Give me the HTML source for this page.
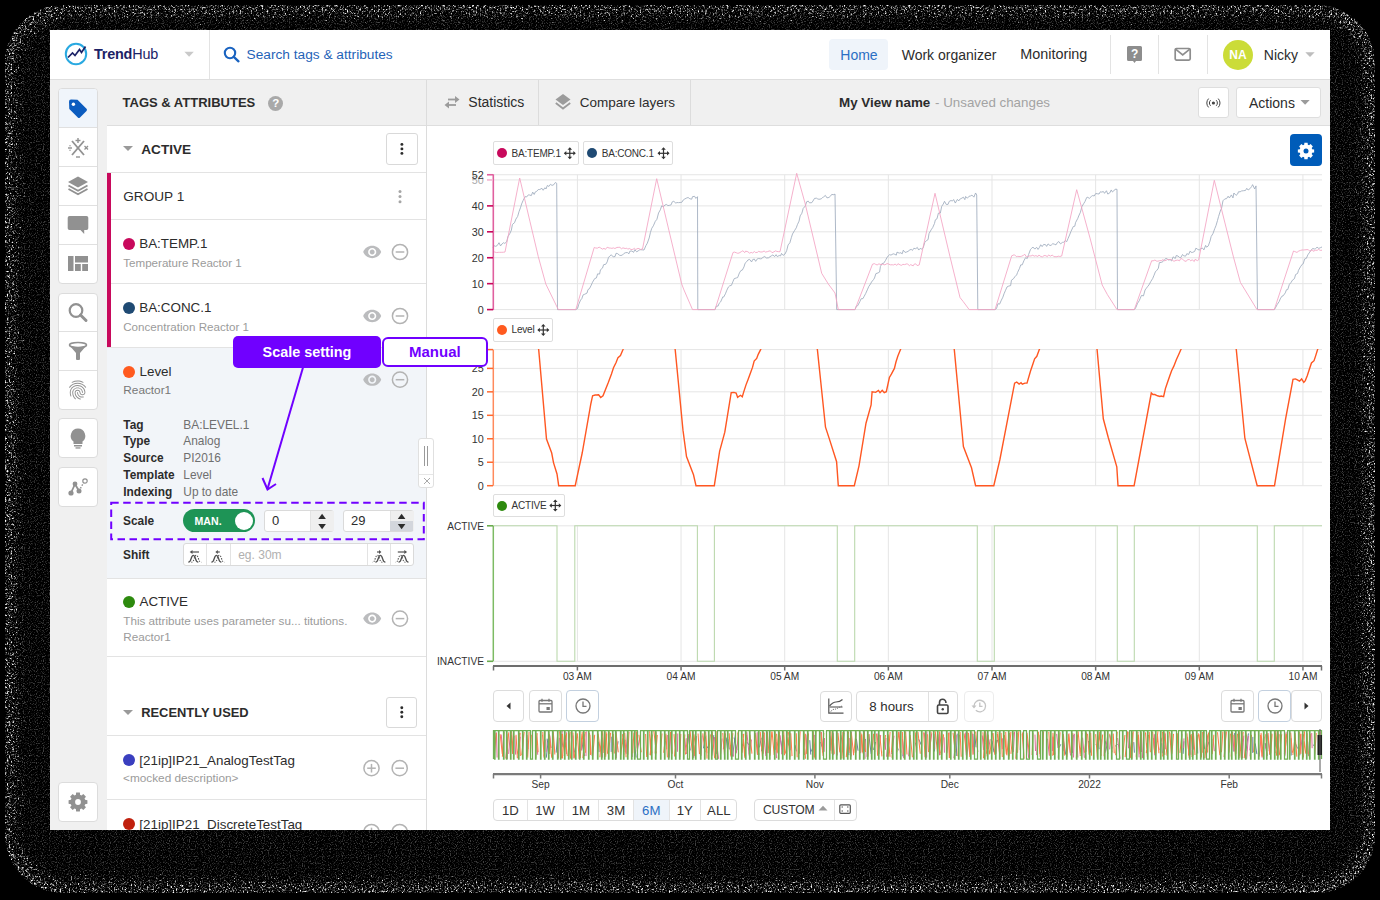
<!DOCTYPE html><html><head><meta charset="utf-8"><style>
html,body{margin:0;padding:0;width:1380px;height:900px;overflow:hidden;background:#000;}
body{position:relative;font-family:"Liberation Sans", sans-serif;}
.t{position:absolute;white-space:nowrap;font-family:"Liberation Sans", sans-serif;}
svg{overflow:visible}
</style></head><body><svg style="position:absolute;left:0;top:0" width="1380" height="900" viewBox="0 0 1380 900"><defs><clipPath id="oc"><rect x="5" y="5" width="1370" height="888" rx="58"/></clipPath><filter id="nz" filterUnits="userSpaceOnUse" x="0" y="0" width="1380" height="900" color-interpolation-filters="sRGB"><feTurbulence type="fractalNoise" baseFrequency="0.55" numOctaves="2" seed="4" result="n"/><feColorMatrix in="n" type="matrix" values="0 0 0 0 0  0 0 0 0 0  0 0 0 0 0  1 0 0 0 0" result="na"/><feGaussianBlur in="SourceAlpha" stdDeviation="16" result="b"/><feComposite in="na" in2="b" operator="arithmetic" k1="0" k2="4" k3="4" k4="-3.65" result="c"/><feColorMatrix in="c" type="matrix" values="0 0 0 0 1  0 0 0 0 1  0 0 0 0 1  0 0 0 1 0"/></filter><filter id="nz2" filterUnits="userSpaceOnUse" x="0" y="0" width="1380" height="900" color-interpolation-filters="sRGB"><feTurbulence type="fractalNoise" baseFrequency="0.85" numOctaves="1" seed="9" result="n"/><feColorMatrix in="n" type="matrix" values="0 0 0 0 0.25  0 0 0 0 0.25  0 0 0 0 0.25  5 0 0 0 -2.6"/><feComposite in2="SourceAlpha" operator="in"/></filter></defs><g clip-path="url(#oc)"><rect x="5" y="5" width="1370" height="888" rx="58" fill="#fff" filter="url(#nz2)"/></g><g clip-path="url(#oc)"><rect x="5" y="5" width="1370" height="888" rx="58" fill="none" stroke="#fff" stroke-width="16" filter="url(#nz)"/></g></svg><div style="position:absolute;left:50.00px;top:30.00px;width:1280.00px;height:800.00px;background:#fff;"></div><div style="position:absolute;left:0;top:0;width:1380px;height:900px;clip-path:inset(30px 50px 70px 50px);"><div style="position:absolute;left:50.00px;top:79.00px;width:1280.00px;height:1.00px;background:#dedede;"></div><svg style="position:absolute;left:60px;top:40px;" width="32" height="30" viewBox="0 0 32 30"><circle cx="16" cy="14" r="10.2" fill="none" stroke="#29a9e1" stroke-width="2"/><polyline points="8,17.5 12.5,13 15,15.5 19.5,9.5 21.5,12.5 25.5,6.5" fill="none" stroke="#1c2266" stroke-width="1.7" stroke-linejoin="miter"/></svg><div class="t" style="left:94.00px;top:46.37px;font-size:14.4px;line-height:17.28px;color:#1c2266;font-weight:400;letter-spacing:-0.2px;"><b>Trend</b>Hub</div><svg style="position:absolute;left:184px;top:51px;" width="11" height="6" viewBox="0 0 11 6"><polygon points="0.4,0.7 9.8,0.7 5.1,5.8" fill="#c9c9c9"/></svg><div style="position:absolute;left:209.00px;top:30.00px;width:1.00px;height:49.00px;background:#e3e3e3;"></div><svg style="position:absolute;left:222px;top:46px;" width="20" height="18" viewBox="0 0 20 18"><circle cx="8" cy="7" r="5.2" fill="none" stroke="#1a63c0" stroke-width="2.1"/><line x1="11.8" y1="10.8" x2="16.5" y2="15.3" stroke="#1a63c0" stroke-width="2.3" stroke-linecap="round"/></svg><div class="t" style="left:246.60px;top:47.43px;font-size:13.7px;line-height:16.44px;color:#1f63b8;font-weight:400;">Search tags &amp; attributes</div><div style="position:absolute;left:829.00px;top:38.50px;width:59.00px;height:31.50px;background:#eff4fa;border-radius:4px;"></div><div class="t" style="left:840.30px;top:46.75px;font-size:14px;line-height:16.8px;color:#2a6fc4;font-weight:400;">Home</div><div class="t" style="left:901.70px;top:46.75px;font-size:14px;line-height:16.8px;color:#2c2c2c;font-weight:400;">Work organizer</div><div class="t" style="left:1020.20px;top:46.37px;font-size:14.4px;line-height:17.28px;color:#2c2c2c;font-weight:400;">Monitoring</div><div style="position:absolute;left:1110.00px;top:35.00px;width:1.00px;height:39.00px;background:#e3e3e3;"></div><div style="position:absolute;left:1158.00px;top:35.00px;width:1.00px;height:39.00px;background:#e3e3e3;"></div><div style="position:absolute;left:1207.00px;top:35.00px;width:1.00px;height:39.00px;background:#e3e3e3;"></div><svg style="position:absolute;left:1126px;top:45px;" width="18" height="20" viewBox="0 0 18 20"><path d="M2.5,1 h12 a1.5,1.5 0 0 1 1.5,1.5 v12 a1.5,1.5 0 0 1 -1.5,1.5 h-4.5 l-1.5,2 l-1.5,-2 h-4.5 a1.5,1.5 0 0 1 -1.5,-1.5 v-12 a1.5,1.5 0 0 1 1.5,-1.5z" fill="#8d8d8d"/><text x="8.6" y="13" font-size="12" font-weight="700" fill="#fff" text-anchor="middle" font-family="Liberation Sans">?</text></svg><svg style="position:absolute;left:1173px;top:46px;" width="20" height="17" viewBox="0 0 20 17"><rect x="2.2" y="2.5" width="15" height="11.6" rx="1.3" fill="none" stroke="#8d8d8d" stroke-width="1.7"/><polyline points="2.6,3.2 9.7,9 16.8,3.2" fill="none" stroke="#8d8d8d" stroke-width="1.7"/></svg><div style="position:absolute;left:1223px;top:39.5px;width:30px;height:30px;border-radius:50%;background:#cbdc38;"></div><div class="t" style="left:1038.00px;width:400px;text-align:center;top:47.64px;font-size:12px;line-height:14.4px;color:#fff;font-weight:700;">NA</div><div class="t" style="left:1263.80px;top:46.85px;font-size:14px;line-height:16.8px;color:#2c2c2c;font-weight:400;">Nicky</div><svg style="position:absolute;left:1305px;top:52px;" width="11" height="6" viewBox="0 0 11 6"><polygon points="0.3,0.2 9.7,0.2 5,4.9" fill="#bdbdbd"/></svg><div style="position:absolute;left:50.00px;top:80.00px;width:57.00px;height:750.00px;background:#f0f0f0;"></div><div style="position:absolute;left:58.00px;top:88.00px;width:40.00px;height:196.00px;background:#fff;border:1px solid #dcdcdc;border-radius:4px;box-sizing:border-box;"></div><div style="position:absolute;left:59.00px;top:89.00px;width:38.00px;height:38.00px;background:#f0f5fb;border-radius:3px 3px 0 0;"></div><div style="position:absolute;left:59.00px;top:127.00px;width:38.00px;height:1.00px;background:#e0e0e0;"></div><div style="position:absolute;left:59.00px;top:166.00px;width:38.00px;height:1.00px;background:#e0e0e0;"></div><div style="position:absolute;left:59.00px;top:205.00px;width:38.00px;height:1.00px;background:#e0e0e0;"></div><div style="position:absolute;left:59.00px;top:244.00px;width:38.00px;height:1.00px;background:#e0e0e0;"></div><div style="position:absolute;left:58.00px;top:292.50px;width:40.00px;height:117.50px;background:#fff;border:1px solid #dcdcdc;border-radius:4px;box-sizing:border-box;"></div><div style="position:absolute;left:59.00px;top:331.00px;width:38.00px;height:1.00px;background:#e0e0e0;"></div><div style="position:absolute;left:59.00px;top:370.00px;width:38.00px;height:1.00px;background:#e0e0e0;"></div><div style="position:absolute;left:58.00px;top:418.00px;width:40.00px;height:40.00px;background:#fff;border:1px solid #dcdcdc;border-radius:4px;box-sizing:border-box;"></div><div style="position:absolute;left:58.00px;top:467.00px;width:40.00px;height:40.00px;background:#fff;border:1px solid #dcdcdc;border-radius:4px;box-sizing:border-box;"></div><div style="position:absolute;left:58.00px;top:782.00px;width:40.00px;height:40.00px;background:#fff;border:1px solid #dcdcdc;border-radius:4px;box-sizing:border-box;"></div><svg style="position:absolute;left:66px;top:97px;" width="24" height="24" viewBox="0 0 24 24"><path d="M3,4.5 a2,2 0 0 1 2,-2 l6.5,0.3 l9,9 a1.6,1.6 0 0 1 0,2.2 l-6.5,6.5 a1.6,1.6 0 0 1 -2.2,0 l-8.5,-8.5z" fill="#0b5cbf"/><circle cx="7.4" cy="7.2" r="1.7" fill="#fff"/></svg><svg style="position:absolute;left:66px;top:137px;" width="24" height="22" viewBox="0 0 24 22"><line x1="6" y1="4" x2="18" y2="18" stroke="#919191" stroke-width="1.8"/><line x1="18" y1="4" x2="6" y2="18" stroke="#919191" stroke-width="1.8"/><line x1="12" y1="1" x2="12" y2="6" stroke="#919191" stroke-width="1.4"/><line x1="9.5" y1="3.5" x2="14.5" y2="3.5" stroke="#919191" stroke-width="1.4"/><line x1="2" y1="11" x2="6" y2="11" stroke="#919191" stroke-width="1.4"/><circle cx="4" cy="8.8" r="0.7" fill="#919191"/><circle cx="4" cy="13.2" r="0.7" fill="#919191"/><line x1="18.5" y1="9" x2="22" y2="12.5" stroke="#919191" stroke-width="1.3"/><line x1="22" y1="9" x2="18.5" y2="12.5" stroke="#919191" stroke-width="1.3"/><line x1="10" y1="20" x2="14" y2="20" stroke="#919191" stroke-width="1.4"/></svg><svg style="position:absolute;left:66px;top:175px;" width="24" height="22" viewBox="0 0 24 22"><polygon points="12,1.5 22,7 12,12.5 2,7" fill="#919191"/><polyline points="2.5,10.5 12,15.8 21.5,10.5" fill="none" stroke="#919191" stroke-width="1.8"/><polyline points="2.5,14 12,19.3 21.5,14" fill="none" stroke="#919191" stroke-width="1.8"/></svg><svg style="position:absolute;left:66px;top:214px;" width="24" height="22" viewBox="0 0 24 22"><path d="M3.5,2 h17 a1.8,1.8 0 0 1 1.8,1.8 v10.5 a1.8,1.8 0 0 1 -1.8,1.8 h-2.3 v3.8 l-3.8,-3.8 h-10.9 a1.8,1.8 0 0 1 -1.8,-1.8 v-10.5 a1.8,1.8 0 0 1 1.8,-1.8z" fill="#919191"/></svg><svg style="position:absolute;left:66px;top:253px;" width="24" height="22" viewBox="0 0 24 22"><rect x="2" y="3" width="5.5" height="15" fill="#919191"/><rect x="9" y="3" width="13" height="6.5" fill="#919191"/><rect x="9" y="11" width="5.8" height="7" fill="#919191"/><rect x="16.2" y="11" width="5.8" height="7" fill="#919191"/></svg><svg style="position:absolute;left:66px;top:301px;" width="24" height="22" viewBox="0 0 24 22"><circle cx="10" cy="9.5" r="6.3" fill="none" stroke="#919191" stroke-width="2.2"/><line x1="14.5" y1="14" x2="20" y2="19.5" stroke="#919191" stroke-width="3" stroke-linecap="round"/></svg><svg style="position:absolute;left:66px;top:340px;" width="24" height="22" viewBox="0 0 24 22"><ellipse cx="12" cy="5" rx="8.5" ry="2.5" fill="none" stroke="#919191" stroke-width="1.6"/><path d="M3.5,5.5 Q12,9 20.5,5.5 L14,13 V19 a1,1 0 0 1 -1,1 h-2 a1,1 0 0 1 -1,-1 V13z" fill="#919191"/></svg><svg style="position:absolute;left:66px;top:378px;" width="24" height="24" viewBox="0 0 24 24"><g transform="translate(0.2,0.6) scale(0.95)"><path d="M17.81 4.47c-.08 0-.16-.02-.23-.06C15.66 3.42 14 3 12.01 3c-1.98 0-3.86.47-5.57 1.41-.24.13-.54.04-.68-.2-.13-.24-.04-.55.2-.68C7.82 2.52 9.86 2 12.01 2c2.13 0 3.98.47 6.01 1.52.25.13.34.43.21.67-.09.18-.26.28-.42.28zM3.5 9.72c-.1 0-.2-.03-.29-.09-.23-.16-.28-.47-.12-.7.99-1.4 2.250-2.5 3.75-3.27C9.98 4.04 14 4.03 17.15 5.65c1.5.77 2.76 1.86 3.75 3.25.16.22.11.54-.12.7-.23.16-.54.11-.7-.12-.9-1.26-2.04-2.25-3.39-2.94-2.87-1.47-6.54-1.47-9.4.01-1.36.7-2.5 1.7-3.4 2.96-.08.14-.23.21-.39.21zm6.25 12.07c-.13 0-.26-.05-.35-.15-.87-.87-1.340-1.43-2.01-2.64-.69-1.23-1.05-2.73-1.05-4.34 0-2.97 2.54-5.39 5.66-5.39s5.66 2.42 5.66 5.39c0 .28-.22.5-.5.5s-.5-.22-.5-.5c0-2.42-2.09-4.39-4.66-4.39-2.57 0-4.66 1.97-4.66 4.39 0 1.44.32 2.77.93 3.85.64 1.15 1.08 1.64 1.85 2.42.19.2.19.51 0 .71-.11.1-.24.15-.37.15zm7.17-1.85c-1.19 0-2.24-.3-3.1-.89-1.49-1.01-2.38-2.65-2.38-4.39 0-.28.22-.5.5-.5s.5.22.5.5c0 1.410.72 2.74 1.94 3.56.71.48 1.54.71 2.54.71.24 0 .64-.03 1.04-.1.27-.05.53.13.58.41.05.27-.13.53-.41.58-.57.11-1.07.12-1.21.12zM14.91 22c-.04 0-.09-.01-.13-.02-1.59-.44-2.63-1.03-3.72-2.1-1.4-1.39-2.17-3.24-2.17-5.22 0-1.62 1.38-2.94 3.08-2.94 1.7 0 3.08 1.32 3.08 2.94 0 1.07.93 1.94 2.08 1.94s2.08-.87 2.08-1.94c0-3.77-3.25-6.830-7.25-6.83-2.84 0-5.44 1.58-6.61 4.03-.39.81-.59 1.76-.59 2.8 0 .78.07 2.01.67 3.61.1.26-.03.55-.29.64-.26.1-.55-.04-.64-.29-.49-1.31-.73-2.61-.73-3.96 0-1.2.23-2.29.68-3.24 1.33-2.79 4.28-4.6 7.51-4.6 4.55 0 8.25 3.51 8.25 7.83 0 1.62-1.38 2.94-3.08 2.94s-3.08-1.32-3.08-2.94c0-1.07-.93-1.94-2.08-1.94s-2.08.87-2.08 1.94c0 1.71.66 3.31 1.87 4.51.95.94 1.86 1.46 3.27 1.85.27.07.42.350.35.61-.05.23-.26.38-.47.38z" fill="#919191"/></g></svg><svg style="position:absolute;left:66px;top:427px;" width="24" height="22" viewBox="0 0 24 22"><path d="M12,1.5 a7.3,7.3 0 0 1 4.5,13 v2.5 h-9 v-2.5 a7.3,7.3 0 0 1 4.5,-13z" fill="#919191"/><rect x="8" y="18" width="8" height="1.5" fill="#919191"/><rect x="9.5" y="20.3" width="5" height="1.3" fill="#919191"/></svg><svg style="position:absolute;left:66px;top:476px;" width="24" height="22" viewBox="0 0 24 22"><line x1="5" y1="17" x2="9" y2="8" stroke="#919191" stroke-width="1.8"/><line x1="9" y1="8" x2="13" y2="15" stroke="#919191" stroke-width="1.8"/><line x1="13" y1="15" x2="18" y2="6" stroke="#919191" stroke-width="1.4" stroke-dasharray="1.5,1.5"/><circle cx="5" cy="17" r="2.6" fill="#919191"/><circle cx="9" cy="8" r="2.4" fill="#919191"/><circle cx="13" cy="15" r="2.5" fill="#919191"/><circle cx="19" cy="5" r="2.2" fill="#fff" stroke="#919191" stroke-width="1.2"/></svg><svg style="position:absolute;left:66px;top:790px;" width="24" height="24" viewBox="0 0 24 24"><polygon points="19.09,9.87 21.42,10.14 21.42,13.86 19.09,14.13 18.52,15.50 19.97,17.35 17.35,19.97 15.50,18.52 14.13,19.09 13.86,21.42 10.14,21.42 9.87,19.09 8.50,18.52 6.65,19.97 4.03,17.35 5.48,15.50 4.91,14.13 2.58,13.86 2.58,10.14 4.91,9.87 5.48,8.50 4.03,6.65 6.65,4.03 8.50,5.48 9.87,4.91 10.14,2.58 13.86,2.58 14.13,4.91 15.50,5.48 17.35,4.03 19.97,6.65 18.52,8.50" fill="#919191"/><circle cx="12" cy="12" r="6.88" fill="#919191"/><circle cx="12" cy="12" r="2.9" fill="#fff"/></svg><div style="position:absolute;left:107.00px;top:80.00px;width:320.00px;height:45.00px;background:#f0f0f0;"></div><div style="position:absolute;left:107.00px;top:125.00px;width:319.00px;height:705.00px;background:#fff;"></div><div style="position:absolute;left:426.00px;top:80.00px;width:1.00px;height:750.00px;background:#dcdcdc;"></div><div style="position:absolute;left:107.00px;top:125.00px;width:319.00px;height:1.00px;background:#dedede;"></div><div class="t" style="left:122.60px;top:95.10px;font-size:13px;line-height:15.6px;color:#2c2c2c;font-weight:700;">TAGS &amp; ATTRIBUTES</div><div style="position:absolute;left:268.3px;top:95.7px;width:15px;height:15px;border-radius:50%;background:#a9a9a9;"></div><div class="t" style="left:75.80px;width:400px;text-align:center;top:96.62px;font-size:11.5px;line-height:13.8px;color:#fff;font-weight:700;">?</div><svg style="position:absolute;left:122px;top:145px;" width="12" height="7" viewBox="0 0 12 7"><polygon points="1,1 11,1 6,6" fill="#9a9a9a"/></svg><div class="t" style="left:141.30px;top:141.63px;font-size:13.6px;line-height:16.32px;color:#2c2c2c;font-weight:700;">ACTIVE</div><div style="position:absolute;left:386.20px;top:133.20px;width:31.40px;height:31.40px;background:#fff;border:1px solid #d9d9d9;border-radius:3px;box-sizing:border-box;"></div><svg style="position:absolute;left:396px;top:140px;" width="10" height="16" viewBox="0 0 10 16"><circle cx="5.90" cy="4.40" r="1.45" fill="#2c2c2c"/><circle cx="5.90" cy="8.90" r="1.45" fill="#2c2c2c"/><circle cx="5.90" cy="13.40" r="1.45" fill="#2c2c2c"/></svg><div style="position:absolute;left:107.00px;top:172.00px;width:319.00px;height:1.00px;background:#e3e3e3;"></div><div style="position:absolute;left:107.00px;top:172.50px;width:4.00px;height:175.00px;background:#c8095c;"></div><div class="t" style="left:123.25px;top:188.88px;font-size:13.6px;line-height:16.32px;color:#2c2c2c;font-weight:400;">GROUP 1</div><svg style="position:absolute;left:395px;top:189px;" width="10" height="16" viewBox="0 0 10 16"><circle cx="5" cy="2.3999999999999995" r="1.5" fill="#a6a6a6"/><circle cx="5" cy="7.6" r="1.5" fill="#a6a6a6"/><circle cx="5" cy="12.8" r="1.5" fill="#a6a6a6"/></svg><div style="position:absolute;left:111.00px;top:219.00px;width:315.00px;height:1.00px;background:#e3e3e3;"></div><div style="position:absolute;left:123.10px;top:237.80px;width:12px;height:12px;border-radius:50%;background:#c8095c;"></div><div class="t" style="left:139.25px;top:236.07px;font-size:13.4px;line-height:16.08px;color:#2c2c2c;font-weight:400;">BA:TEMP.1</div><div class="t" style="left:123.25px;top:255.77px;font-size:11.6px;line-height:13.92px;color:#9b9b9b;font-weight:400;">Temperature Reactor 1</div><svg style="position:absolute;left:362px;top:242px;" width="20" height="20" viewBox="0 0 20 20"><g transform="translate(0.38,0.18) scale(0.818)"><path d="M12 4.5C7 4.5 2.73 7.61 1 12c1.73 4.39 6 7.5 11 7.5s9.27-3.11 11-7.5c-1.73-4.39-6-7.5-11-7.5zM12 17c-2.76 0-5-2.24-5-5s2.24-5 5-5 5 2.24 5 5-2.24 5-5 5zm0-8c-1.66 0-3 1.34-3 3s1.34 3 3 3 3-1.34 3-3-1.34-3-3-3z" fill="#bbbcbe"/></g></svg><svg style="position:absolute;left:390px;top:242px;" width="20" height="20" viewBox="0 0 20 20"><circle cx="10.00" cy="10.00" r="7.6" fill="none" stroke="#b3b3b3" stroke-width="1.5"/><line x1="5.70" y1="10.00" x2="14.30" y2="10.00" stroke="#b3b3b3" stroke-width="1.5"/></svg><div style="position:absolute;left:111.00px;top:283.00px;width:315.00px;height:1.00px;background:#e3e3e3;"></div><div style="position:absolute;left:123.10px;top:301.60px;width:12px;height:12px;border-radius:50%;background:#1f4a73;"></div><div class="t" style="left:139.25px;top:299.82px;font-size:13.4px;line-height:16.08px;color:#2c2c2c;font-weight:400;">BA:CONC.1</div><div class="t" style="left:123.25px;top:319.52px;font-size:11.6px;line-height:13.92px;color:#9b9b9b;font-weight:400;">Concentration Reactor 1</div><svg style="position:absolute;left:362px;top:306px;" width="20" height="20" viewBox="0 0 20 20"><g transform="translate(0.38,0.18) scale(0.818)"><path d="M12 4.5C7 4.5 2.73 7.61 1 12c1.73 4.39 6 7.5 11 7.5s9.27-3.11 11-7.5c-1.73-4.39-6-7.5-11-7.5zM12 17c-2.76 0-5-2.24-5-5s2.24-5 5-5 5 2.24 5 5-2.24 5-5 5zm0-8c-1.66 0-3 1.34-3 3s1.34 3 3 3 3-1.34 3-3-1.34-3-3-3z" fill="#bbbcbe"/></g></svg><svg style="position:absolute;left:390px;top:306px;" width="20" height="20" viewBox="0 0 20 20"><circle cx="10.00" cy="10.00" r="7.6" fill="none" stroke="#b3b3b3" stroke-width="1.5"/><line x1="5.70" y1="10.00" x2="14.30" y2="10.00" stroke="#b3b3b3" stroke-width="1.5"/></svg><div style="position:absolute;left:107.00px;top:347.00px;width:319.00px;height:1.00px;background:#e3e3e3;"></div><div style="position:absolute;left:107.00px;top:348.00px;width:319.00px;height:230.50px;background:#f2f5f9;"></div><div style="position:absolute;left:123.10px;top:365.60px;width:12px;height:12px;border-radius:50%;background:#ff5a1f;"></div><div class="t" style="left:139.50px;top:363.62px;font-size:13.4px;line-height:16.08px;color:#2c2c2c;font-weight:400;">Level</div><div class="t" style="left:123.30px;top:383.43px;font-size:11.8px;line-height:14.16px;color:#777;font-weight:400;">Reactor1</div><svg style="position:absolute;left:362px;top:369px;" width="20" height="20" viewBox="0 0 20 20"><g transform="translate(0.38,0.88) scale(0.818)"><path d="M12 4.5C7 4.5 2.73 7.61 1 12c1.73 4.39 6 7.5 11 7.5s9.27-3.11 11-7.5c-1.73-4.39-6-7.5-11-7.5zM12 17c-2.76 0-5-2.24-5-5s2.24-5 5-5 5 2.24 5 5-2.24 5-5 5zm0-8c-1.66 0-3 1.34-3 3s1.34 3 3 3 3-1.34 3-3-1.34-3-3-3z" fill="#bbbcbe"/></g></svg><svg style="position:absolute;left:390px;top:369px;" width="20" height="20" viewBox="0 0 20 20"><circle cx="10.00" cy="10.70" r="7.6" fill="none" stroke="#b3b3b3" stroke-width="1.5"/><line x1="5.70" y1="10.70" x2="14.30" y2="10.70" stroke="#b3b3b3" stroke-width="1.5"/></svg><div class="t" style="left:123.30px;top:417.74px;font-size:11.9px;line-height:14.28px;color:#2c2c2c;font-weight:700;">Tag</div><div class="t" style="left:183.30px;top:417.74px;font-size:11.9px;line-height:14.28px;color:#6f6f6f;font-weight:400;">BA:LEVEL.1</div><div class="t" style="left:123.30px;top:434.24px;font-size:11.9px;line-height:14.28px;color:#2c2c2c;font-weight:700;">Type</div><div class="t" style="left:183.30px;top:434.24px;font-size:11.9px;line-height:14.28px;color:#6f6f6f;font-weight:400;">Analog</div><div class="t" style="left:123.30px;top:451.24px;font-size:11.9px;line-height:14.28px;color:#2c2c2c;font-weight:700;">Source</div><div class="t" style="left:183.30px;top:451.24px;font-size:11.9px;line-height:14.28px;color:#6f6f6f;font-weight:400;">PI2016</div><div class="t" style="left:123.30px;top:468.24px;font-size:11.9px;line-height:14.28px;color:#2c2c2c;font-weight:700;">Template</div><div class="t" style="left:183.30px;top:468.24px;font-size:11.9px;line-height:14.28px;color:#6f6f6f;font-weight:400;">Level</div><div class="t" style="left:123.30px;top:484.74px;font-size:11.9px;line-height:14.28px;color:#2c2c2c;font-weight:700;">Indexing</div><div class="t" style="left:183.30px;top:484.74px;font-size:11.9px;line-height:14.28px;color:#6f6f6f;font-weight:400;">Up to date</div><svg style="position:absolute;left:0px;top:0px;" width="1380" height="900" viewBox="0 0 1380 900"><rect x="111.2" y="502.7" width="312.6" height="36.6" fill="none" stroke="#7000ff" stroke-width="2" stroke-dasharray="7.5,4.5"/></svg><div class="t" style="left:123.00px;top:513.74px;font-size:11.9px;line-height:14.28px;color:#2c2c2c;font-weight:700;">Scale</div><div style="position:absolute;left:182.80px;top:509.00px;width:72.30px;height:23.20px;background:#1e9456;border-radius:12px;"></div><div style="position:absolute;left:235.00px;top:511.60px;width:18px;height:18px;border-radius:50%;background:#fff;"></div><div class="t" style="left:194.50px;top:514.57px;font-size:10.6px;line-height:12.72px;color:#fff;font-weight:700;">MAN.</div><div style="position:absolute;left:263.50px;top:509.50px;width:70.70px;height:22.70px;background:#fff;border:1px solid #dadada;border-radius:3px;box-sizing:border-box;"></div><div style="position:absolute;left:310.00px;top:510.50px;width:23.20px;height:20.70px;background:#efefef;border-left:1px solid #e3e3e3;"></div><svg style="position:absolute;left:316px;top:511px;" width="12" height="20" viewBox="0 0 12 20"><polygon points="2.30,8 9.90,8 6.10,2.8" fill="#2c2c2c"/><polygon points="2.30,13 9.90,13 6.10,18.2" fill="#2c2c2c"/></svg><div class="t" style="left:272.00px;top:512.70px;font-size:13px;line-height:15.6px;color:#2c2c2c;font-weight:400;">0</div><div style="position:absolute;left:342.60px;top:509.50px;width:71.00px;height:22.70px;background:#fff;border:1px solid #dadada;border-radius:3px;box-sizing:border-box;"></div><div style="position:absolute;left:389.60px;top:510.50px;width:23.00px;height:20.70px;background:#efefef;border-left:1px solid #e3e3e3;"></div><div style="position:absolute;left:389.60px;top:520.85px;width:23.00px;height:10.35px;background:#d3d6dc;"></div><svg style="position:absolute;left:395px;top:511px;" width="12" height="20" viewBox="0 0 12 20"><polygon points="2.80,8 10.40,8 6.60,2.8" fill="#2c2c2c"/><polygon points="2.80,13 10.40,13 6.60,18.2" fill="#2c2c2c"/></svg><div class="t" style="left:351.10px;top:512.70px;font-size:13px;line-height:15.6px;color:#2c2c2c;font-weight:400;">29</div><div class="t" style="left:123.00px;top:547.74px;font-size:11.9px;line-height:14.28px;color:#2c2c2c;font-weight:700;">Shift</div><div style="position:absolute;left:183.30px;top:543.40px;width:230.30px;height:23.00px;background:#fff;border:1px solid #dadada;border-radius:3px;box-sizing:border-box;"></div><div style="position:absolute;left:206.30px;top:544.40px;width:1.00px;height:21.00px;background:#e3e3e3;"></div><div style="position:absolute;left:229.50px;top:544.40px;width:1.00px;height:21.00px;background:#e3e3e3;"></div><div style="position:absolute;left:367.40px;top:544.40px;width:1.00px;height:21.00px;background:#e3e3e3;"></div><div style="position:absolute;left:390.40px;top:544.40px;width:1.00px;height:21.00px;background:#e3e3e3;"></div><svg style="position:absolute;left:184px;top:548px;" width="20" height="20" viewBox="0 0 20 20"><g transform="translate(10.50,10.20) scale(1,1)"><path d="M-6.2,4 Q-4.2,4 -3.4000000000000004,0.5 Q-2.4,-2.8 -1.2,-2.8 Q0.0,-2.8 1.0000000000000002,0.5 Q1.8,4 3.8,4" fill="none" stroke="#505050" stroke-width="1.3"/><path d="M-3.2,4 Q-1.2,4 -0.40000000000000013,0.5 Q0.6000000000000001,-2.8 1.8,-2.8 Q3.0,-2.8 4.0,0.5 Q4.8,4 6.8,4" fill="none" stroke="#505050" stroke-width="1.1" stroke-dasharray="1.2,1.3"/><line x1="-2.5" y1="-6.2" x2="4.5" y2="-6.2" stroke="#505050" stroke-width="1.2"/><polygon points="-4.8,-6.2 -2,-8.3 -2,-4.1" fill="#505050"/></g></svg><svg style="position:absolute;left:207px;top:548px;" width="20" height="20" viewBox="0 0 20 20"><g transform="translate(10.60,10.20) scale(1,1)"><path d="M-6.2,4 Q-4.2,4 -3.4000000000000004,0.5 Q-2.4,-2.8 -1.2,-2.8 Q0.0,-2.8 1.0000000000000002,0.5 Q1.8,4 3.8,4" fill="none" stroke="#505050" stroke-width="1.3"/><path d="M-3.2,4 Q-1.2,4 -0.40000000000000013,0.5 Q0.6000000000000001,-2.8 1.8,-2.8 Q3.0,-2.8 4.0,0.5 Q4.8,4 6.8,4" fill="none" stroke="#505050" stroke-width="1.1" stroke-dasharray="1.2,1.3"/><line x1="-0.5" y1="-6.2" x2="2.2" y2="-6.2" stroke="#505050" stroke-width="1.2"/><polygon points="-2.2,-6.2 0.2,-8.1 0.2,-4.3" fill="#505050"/></g></svg><svg style="position:absolute;left:369px;top:548px;" width="20" height="20" viewBox="0 0 20 20"><g transform="translate(10.20,10.20) scale(-1,1)"><path d="M-6.2,4 Q-4.2,4 -3.4000000000000004,0.5 Q-2.4,-2.8 -1.2,-2.8 Q0.0,-2.8 1.0000000000000002,0.5 Q1.8,4 3.8,4" fill="none" stroke="#505050" stroke-width="1.3"/><path d="M-3.2,4 Q-1.2,4 -0.40000000000000013,0.5 Q0.6000000000000001,-2.8 1.8,-2.8 Q3.0,-2.8 4.0,0.5 Q4.8,4 6.8,4" fill="none" stroke="#505050" stroke-width="1.1" stroke-dasharray="1.2,1.3"/><line x1="-0.5" y1="-6.2" x2="2.2" y2="-6.2" stroke="#505050" stroke-width="1.2"/><polygon points="-2.2,-6.2 0.2,-8.1 0.2,-4.3" fill="#505050"/></g></svg><svg style="position:absolute;left:392px;top:548px;" width="20" height="20" viewBox="0 0 20 20"><g transform="translate(10.30,10.20) scale(-1,1)"><path d="M-6.2,4 Q-4.2,4 -3.4000000000000004,0.5 Q-2.4,-2.8 -1.2,-2.8 Q0.0,-2.8 1.0000000000000002,0.5 Q1.8,4 3.8,4" fill="none" stroke="#505050" stroke-width="1.3"/><path d="M-3.2,4 Q-1.2,4 -0.40000000000000013,0.5 Q0.6000000000000001,-2.8 1.8,-2.8 Q3.0,-2.8 4.0,0.5 Q4.8,4 6.8,4" fill="none" stroke="#505050" stroke-width="1.1" stroke-dasharray="1.2,1.3"/><line x1="-2.5" y1="-6.2" x2="4.5" y2="-6.2" stroke="#505050" stroke-width="1.2"/><polygon points="-4.8,-6.2 -2,-8.3 -2,-4.1" fill="#505050"/></g></svg><div class="t" style="left:238.20px;top:548.14px;font-size:12px;line-height:14.4px;color:#b0b0b0;font-weight:400;">eg. 30m</div><div style="position:absolute;left:418.30px;top:437.70px;width:15.70px;height:50.30px;background:#fff;border:1px solid #e0e0e0;border-radius:3px;box-sizing:border-box;"></div><div style="position:absolute;left:419.00px;top:474.00px;width:14.00px;height:1.00px;background:#e6e6e6;"></div><div style="position:absolute;left:424.20px;top:446.00px;width:1.00px;height:20.00px;background:#9a9a9a;"></div><div style="position:absolute;left:427.20px;top:446.00px;width:1.00px;height:20.00px;background:#9a9a9a;"></div><svg style="position:absolute;left:422px;top:476px;" width="10" height="10" viewBox="0 0 10 10"><line x1="2" y1="2" x2="8" y2="8" stroke="#aaa" stroke-width="1"/><line x1="8" y1="2" x2="2" y2="8" stroke="#aaa" stroke-width="1"/></svg><div style="position:absolute;left:107.00px;top:578.30px;width:319.00px;height:1.00px;background:#e3e3e3;"></div><div style="position:absolute;left:123.10px;top:596.00px;width:12px;height:12px;border-radius:50%;background:#2d8a0e;"></div><div class="t" style="left:139.50px;top:594.32px;font-size:13.4px;line-height:16.08px;color:#2c2c2c;font-weight:400;">ACTIVE</div><div class="t" style="left:123.30px;top:613.93px;font-size:11.7px;line-height:14.04px;color:#9b9b9b;font-weight:400;">This attribute uses parameter su... titutions.</div><div class="t" style="left:123.30px;top:629.63px;font-size:11.7px;line-height:14.04px;color:#9b9b9b;font-weight:400;">Reactor1</div><svg style="position:absolute;left:362px;top:608px;" width="20" height="20" viewBox="0 0 20 20"><g transform="translate(0.38,0.78) scale(0.818)"><path d="M12 4.5C7 4.5 2.73 7.61 1 12c1.73 4.39 6 7.5 11 7.5s9.27-3.11 11-7.5c-1.73-4.39-6-7.5-11-7.5zM12 17c-2.76 0-5-2.24-5-5s2.24-5 5-5 5 2.24 5 5-2.24 5-5 5zm0-8c-1.66 0-3 1.34-3 3s1.34 3 3 3 3-1.34 3-3-1.34-3-3-3z" fill="#bbbcbe"/></g></svg><svg style="position:absolute;left:390px;top:608px;" width="20" height="20" viewBox="0 0 20 20"><circle cx="10.00" cy="10.60" r="7.6" fill="none" stroke="#b3b3b3" stroke-width="1.5"/><line x1="5.70" y1="10.60" x2="14.30" y2="10.60" stroke="#b3b3b3" stroke-width="1.5"/></svg><div style="position:absolute;left:107.00px;top:656.30px;width:319.00px;height:1.00px;background:#e3e3e3;"></div><svg style="position:absolute;left:122px;top:709px;" width="12" height="7" viewBox="0 0 12 7"><polygon points="1,1 11,1 6,6" fill="#9a9a9a"/></svg><div class="t" style="left:141.20px;top:705.09px;font-size:12.9px;line-height:15.48px;color:#2c2c2c;font-weight:700;">RECENTLY USED</div><div style="position:absolute;left:386.20px;top:696.70px;width:31.20px;height:31.20px;background:#fff;border:1px solid #d9d9d9;border-radius:3px;box-sizing:border-box;"></div><svg style="position:absolute;left:396px;top:704px;" width="10" height="16" viewBox="0 0 10 16"><circle cx="5.80" cy="3.80" r="1.45" fill="#2c2c2c"/><circle cx="5.80" cy="8.30" r="1.45" fill="#2c2c2c"/><circle cx="5.80" cy="12.80" r="1.45" fill="#2c2c2c"/></svg><div style="position:absolute;left:107.00px;top:735.30px;width:319.00px;height:1.00px;background:#e3e3e3;"></div><div style="position:absolute;left:123.10px;top:754.30px;width:12px;height:12px;border-radius:50%;background:#3a3fbf;"></div><div class="t" style="left:139.30px;top:753.32px;font-size:13.4px;line-height:16.08px;color:#2c2c2c;font-weight:400;">[21ip]IP21_AnalogTestTag</div><div class="t" style="left:123.00px;top:770.83px;font-size:11.8px;line-height:14.16px;color:#9b9b9b;font-weight:400;">&lt;mocked description&gt;</div><svg style="position:absolute;left:361px;top:758px;" width="20" height="20" viewBox="0 0 20 20"><circle cx="10.50" cy="10.20" r="7.6" fill="none" stroke="#b3b3b3" stroke-width="1.5"/><line x1="6.20" y1="10.20" x2="14.80" y2="10.20" stroke="#b3b3b3" stroke-width="1.5"/><line x1="10.50" y1="5.90" x2="10.50" y2="14.50" stroke="#b3b3b3" stroke-width="1.5"/></svg><svg style="position:absolute;left:389px;top:758px;" width="20" height="20" viewBox="0 0 20 20"><circle cx="10.70" cy="10.20" r="7.6" fill="none" stroke="#b3b3b3" stroke-width="1.5"/><line x1="6.40" y1="10.20" x2="15.00" y2="10.20" stroke="#b3b3b3" stroke-width="1.5"/></svg><div style="position:absolute;left:107.00px;top:799.00px;width:319.00px;height:1.00px;background:#e3e3e3;"></div><div style="position:absolute;left:123.10px;top:818.40px;width:12px;height:12px;border-radius:50%;background:#c0200d;"></div><div class="t" style="left:139.30px;top:817.32px;font-size:13.4px;line-height:16.08px;color:#2c2c2c;font-weight:400;">[21ip]IP21_DiscreteTestTag</div><svg style="position:absolute;left:361px;top:822px;" width="20" height="20" viewBox="0 0 20 20"><circle cx="10.50" cy="10.00" r="7.6" fill="none" stroke="#b3b3b3" stroke-width="1.5"/><line x1="6.20" y1="10.00" x2="14.80" y2="10.00" stroke="#b3b3b3" stroke-width="1.5"/><line x1="10.50" y1="5.70" x2="10.50" y2="14.30" stroke="#b3b3b3" stroke-width="1.5"/></svg><svg style="position:absolute;left:389px;top:822px;" width="20" height="20" viewBox="0 0 20 20"><circle cx="10.70" cy="10.00" r="7.6" fill="none" stroke="#b3b3b3" stroke-width="1.5"/><line x1="6.40" y1="10.00" x2="15.00" y2="10.00" stroke="#b3b3b3" stroke-width="1.5"/></svg><div style="position:absolute;left:427.00px;top:80.00px;width:903.00px;height:45.00px;background:#f0f0f0;"></div><div style="position:absolute;left:427.00px;top:125.00px;width:903.00px;height:1.00px;background:#dedede;"></div><div style="position:absolute;left:538.00px;top:80.00px;width:1.00px;height:45.00px;background:#dcdcdc;"></div><div style="position:absolute;left:689.50px;top:80.00px;width:1.00px;height:45.00px;background:#dcdcdc;"></div><svg style="position:absolute;left:443px;top:94px;" width="18" height="16" viewBox="0 0 18 16"><line x1="5" y1="5.5" x2="15" y2="5.5" stroke="#9b9b9b" stroke-width="1.8"/><polygon points="12,2 16.5,5.5 12,9" fill="#9b9b9b"/><line x1="3" y1="11" x2="13" y2="11" stroke="#9b9b9b" stroke-width="1.8"/><polygon points="6,7.5 1.5,11 6,14.5" fill="#9b9b9b"/></svg><div class="t" style="left:468.30px;top:94.15px;font-size:14px;line-height:16.8px;color:#2c2c2c;font-weight:400;">Statistics</div><svg style="position:absolute;left:554px;top:93px;" width="18" height="18" viewBox="0 0 18 18"><polygon points="9,1 16.5,6.5 9,12 1.5,6.5" fill="#9b9b9b"/><polyline points="1.8,10 9,15.5 16.2,10" fill="none" stroke="#9b9b9b" stroke-width="1.8"/></svg><div class="t" style="left:579.80px;top:94.62px;font-size:13.5px;line-height:16.2px;color:#2c2c2c;font-weight:400;">Compare layers</div><div class="t" style="left:839.00px;top:94.72px;font-size:13.4px;line-height:16.08px;color:#2c2c2c;font-weight:700;">My View name</div><div class="t" style="left:935.00px;top:94.76px;font-size:13.35px;line-height:16.02px;color:#a3a3a3;font-weight:400;">- Unsaved changes</div><div style="position:absolute;left:1198.10px;top:86.70px;width:30.60px;height:31.10px;background:#fff;border:1px solid #dedede;border-radius:3px;box-sizing:border-box;"></div><svg style="position:absolute;left:1203px;top:93px;" width="20" height="20" viewBox="0 0 20 20"><circle cx="10.4" cy="10" r="1.6" fill="#444"/><path d="M7.6,7.2 a3.9,3.9 0 0 0 0,5.6 M13.2,7.2 a3.9,3.9 0 0 1 0,5.6" fill="none" stroke="#444" stroke-width="1"/><path d="M5.6,5.6 a6.3,6.3 0 0 0 0,8.8 M15.2,5.6 a6.3,6.3 0 0 1 0,8.8" fill="none" stroke="#444" stroke-width="1"/></svg><div style="position:absolute;left:1236.10px;top:86.70px;width:84.90px;height:31.10px;background:#fff;border:1px solid #dedede;border-radius:3px;box-sizing:border-box;"></div><div class="t" style="left:1249.00px;top:95.05px;font-size:14px;line-height:16.8px;color:#2c2c2c;font-weight:400;">Actions</div><svg style="position:absolute;left:1300px;top:99px;" width="11" height="7" viewBox="0 0 11 7"><polygon points="0.5,1 9.7,1 5.1,5.8" fill="#9b9b9b"/></svg><div style="position:absolute;left:1290.00px;top:134.00px;width:32.00px;height:32.00px;background:#005cb9;border-radius:4px;"></div><svg style="position:absolute;left:1296px;top:141px;" width="20" height="20" viewBox="0 0 20 20"><polygon points="16.13,8.16 18.14,8.39 18.14,11.61 16.13,11.84 15.64,13.03 16.89,14.62 14.62,16.89 13.03,15.64 11.84,16.13 11.61,18.14 8.39,18.14 8.16,16.13 6.97,15.64 5.38,16.89 3.11,14.62 4.36,13.03 3.87,11.84 1.86,11.61 1.86,8.39 3.87,8.16 4.36,6.97 3.11,5.38 5.38,3.11 6.97,4.36 8.16,3.87 8.39,1.86 11.61,1.86 11.84,3.87 13.03,4.36 14.62,3.11 16.89,5.38 15.64,6.97" fill="#fff"/><circle cx="10" cy="10" r="5.95" fill="#fff"/><circle cx="10" cy="10" r="2.5" fill="#005cb9"/></svg><div style="position:absolute;left:492.70px;top:141.20px;width:86.70px;height:24.20px;background:#fff;border:1px solid #dedede;border-radius:2px;box-sizing:border-box;"></div><div style="position:absolute;left:497.00px;top:148.30px;width:10px;height:10px;border-radius:50%;background:#c8095c;"></div><div class="t" style="left:511.60px;top:147.53px;font-size:10px;line-height:12.0px;color:#333;font-weight:400;letter-spacing:-0.2px;">BA:TEMP.1</div><svg style="position:absolute;left:563px;top:145px;" width="16" height="16" viewBox="0 0 16 16"><g transform="translate(6.80,8.30)"><line x1="-5" y1="0" x2="5" y2="0" stroke="#333" stroke-width="1.2"/><line x1="0" y1="-5" x2="0" y2="5" stroke="#333" stroke-width="1.2"/><polygon points="-6,0 -3.5,-2.3 -3.5,2.3" fill="#333"/><polygon points="6,0 3.5,-2.3 3.5,2.3" fill="#333"/><polygon points="0,-6 -2.3,-3.5 2.3,-3.5" fill="#333"/><polygon points="0,6 -2.3,3.5 2.3,3.5" fill="#333"/></g></svg><div style="position:absolute;left:583.10px;top:141.20px;width:89.70px;height:24.20px;background:#fff;border:1px solid #dedede;border-radius:2px;box-sizing:border-box;"></div><div style="position:absolute;left:587.40px;top:148.30px;width:10px;height:10px;border-radius:50%;background:#1f4a73;"></div><div class="t" style="left:601.70px;top:147.53px;font-size:10px;line-height:12.0px;color:#333;font-weight:400;letter-spacing:-0.2px;">BA:CONC.1</div><svg style="position:absolute;left:656px;top:145px;" width="16" height="16" viewBox="0 0 16 16"><g transform="translate(7.50,8.30)"><line x1="-5" y1="0" x2="5" y2="0" stroke="#333" stroke-width="1.2"/><line x1="0" y1="-5" x2="0" y2="5" stroke="#333" stroke-width="1.2"/><polygon points="-6,0 -3.5,-2.3 -3.5,2.3" fill="#333"/><polygon points="6,0 3.5,-2.3 3.5,2.3" fill="#333"/><polygon points="0,-6 -2.3,-3.5 2.3,-3.5" fill="#333"/><polygon points="0,6 -2.3,3.5 2.3,3.5" fill="#333"/></g></svg><div style="position:absolute;left:493.00px;top:318.40px;width:59.60px;height:23.20px;background:#fff;border:1px solid #dedede;border-radius:2px;box-sizing:border-box;"></div><div style="position:absolute;left:497.30px;top:325.00px;width:10px;height:10px;border-radius:50%;background:#ff5a1f;"></div><div class="t" style="left:511.60px;top:324.23px;font-size:10px;line-height:12.0px;color:#333;font-weight:400;letter-spacing:-0.2px;">Level</div><svg style="position:absolute;left:536px;top:322px;" width="16" height="16" viewBox="0 0 16 16"><g transform="translate(7.30,8.00)"><line x1="-5" y1="0" x2="5" y2="0" stroke="#333" stroke-width="1.2"/><line x1="0" y1="-5" x2="0" y2="5" stroke="#333" stroke-width="1.2"/><polygon points="-6,0 -3.5,-2.3 -3.5,2.3" fill="#333"/><polygon points="6,0 3.5,-2.3 3.5,2.3" fill="#333"/><polygon points="0,-6 -2.3,-3.5 2.3,-3.5" fill="#333"/><polygon points="0,6 -2.3,3.5 2.3,3.5" fill="#333"/></g></svg><div style="position:absolute;left:493.00px;top:494.00px;width:71.50px;height:23.00px;background:#fff;border:1px solid #dedede;border-radius:2px;box-sizing:border-box;"></div><div style="position:absolute;left:497.30px;top:500.50px;width:10px;height:10px;border-radius:50%;background:#2d8a0e;"></div><div class="t" style="left:511.60px;top:499.73px;font-size:10px;line-height:12.0px;color:#333;font-weight:400;letter-spacing:-0.2px;">ACTIVE</div><svg style="position:absolute;left:548px;top:497px;" width="16" height="16" viewBox="0 0 16 16"><g transform="translate(7.30,8.50)"><line x1="-5" y1="0" x2="5" y2="0" stroke="#333" stroke-width="1.2"/><line x1="0" y1="-5" x2="0" y2="5" stroke="#333" stroke-width="1.2"/><polygon points="-6,0 -3.5,-2.3 -3.5,2.3" fill="#333"/><polygon points="6,0 3.5,-2.3 3.5,2.3" fill="#333"/><polygon points="0,-6 -2.3,-3.5 2.3,-3.5" fill="#333"/><polygon points="0,6 -2.3,3.5 2.3,3.5" fill="#333"/></g></svg><svg style="position:absolute;left:0;top:0" width="1380" height="900" viewBox="0 0 1380 900"><line x1="493.00" y1="174.76" x2="1322.00" y2="174.76" stroke="#e5e5e5" stroke-width="1" /><line x1="493.00" y1="179.95" x2="1322.00" y2="179.95" stroke="#e5e5e5" stroke-width="1" /><line x1="493.00" y1="205.88" x2="1322.00" y2="205.88" stroke="#e5e5e5" stroke-width="1" /><line x1="493.00" y1="231.81" x2="1322.00" y2="231.81" stroke="#e5e5e5" stroke-width="1" /><line x1="493.00" y1="257.74" x2="1322.00" y2="257.74" stroke="#e5e5e5" stroke-width="1" /><line x1="493.00" y1="283.67" x2="1322.00" y2="283.67" stroke="#e5e5e5" stroke-width="1" /><line x1="493.00" y1="309.60" x2="1322.00" y2="309.60" stroke="#e5e5e5" stroke-width="1" /><line x1="577.40" y1="174.76" x2="577.40" y2="309.60" stroke="#e5e5e5" stroke-width="1" /><line x1="577.40" y1="525.80" x2="577.40" y2="661.30" stroke="#e5e5e5" stroke-width="1" /><line x1="577.40" y1="349.60" x2="577.40" y2="485.70" stroke="#e5e5e5" stroke-width="1" /><line x1="681.05" y1="174.76" x2="681.05" y2="309.60" stroke="#e5e5e5" stroke-width="1" /><line x1="681.05" y1="525.80" x2="681.05" y2="661.30" stroke="#e5e5e5" stroke-width="1" /><line x1="681.05" y1="349.60" x2="681.05" y2="485.70" stroke="#e5e5e5" stroke-width="1" /><line x1="784.70" y1="174.76" x2="784.70" y2="309.60" stroke="#e5e5e5" stroke-width="1" /><line x1="784.70" y1="525.80" x2="784.70" y2="661.30" stroke="#e5e5e5" stroke-width="1" /><line x1="784.70" y1="349.60" x2="784.70" y2="485.70" stroke="#e5e5e5" stroke-width="1" /><line x1="888.35" y1="174.76" x2="888.35" y2="309.60" stroke="#e5e5e5" stroke-width="1" /><line x1="888.35" y1="525.80" x2="888.35" y2="661.30" stroke="#e5e5e5" stroke-width="1" /><line x1="888.35" y1="349.60" x2="888.35" y2="485.70" stroke="#e5e5e5" stroke-width="1" /><line x1="992.00" y1="174.76" x2="992.00" y2="309.60" stroke="#e5e5e5" stroke-width="1" /><line x1="992.00" y1="525.80" x2="992.00" y2="661.30" stroke="#e5e5e5" stroke-width="1" /><line x1="992.00" y1="349.60" x2="992.00" y2="485.70" stroke="#e5e5e5" stroke-width="1" /><line x1="1095.65" y1="174.76" x2="1095.65" y2="309.60" stroke="#e5e5e5" stroke-width="1" /><line x1="1095.65" y1="525.80" x2="1095.65" y2="661.30" stroke="#e5e5e5" stroke-width="1" /><line x1="1095.65" y1="349.60" x2="1095.65" y2="485.70" stroke="#e5e5e5" stroke-width="1" /><line x1="1199.30" y1="174.76" x2="1199.30" y2="309.60" stroke="#e5e5e5" stroke-width="1" /><line x1="1199.30" y1="525.80" x2="1199.30" y2="661.30" stroke="#e5e5e5" stroke-width="1" /><line x1="1199.30" y1="349.60" x2="1199.30" y2="485.70" stroke="#e5e5e5" stroke-width="1" /><line x1="1302.95" y1="174.76" x2="1302.95" y2="309.60" stroke="#e5e5e5" stroke-width="1" /><line x1="1302.95" y1="525.80" x2="1302.95" y2="661.30" stroke="#e5e5e5" stroke-width="1" /><line x1="1302.95" y1="349.60" x2="1302.95" y2="485.70" stroke="#e5e5e5" stroke-width="1" /><line x1="493.00" y1="368.38" x2="1322.00" y2="368.38" stroke="#e5e5e5" stroke-width="1" /><line x1="493.00" y1="391.84" x2="1322.00" y2="391.84" stroke="#e5e5e5" stroke-width="1" /><line x1="493.00" y1="415.31" x2="1322.00" y2="415.31" stroke="#e5e5e5" stroke-width="1" /><line x1="493.00" y1="438.77" x2="1322.00" y2="438.77" stroke="#e5e5e5" stroke-width="1" /><line x1="493.00" y1="462.24" x2="1322.00" y2="462.24" stroke="#e5e5e5" stroke-width="1" /><line x1="493.00" y1="485.70" x2="1322.00" y2="485.70" stroke="#e5e5e5" stroke-width="1" /><line x1="493.00" y1="349.60" x2="1322.00" y2="349.60" stroke="#e5e5e5" stroke-width="1" /><line x1="493.00" y1="525.80" x2="1322.00" y2="525.80" stroke="#e5e5e5" stroke-width="1" /><line x1="493.00" y1="661.30" x2="1322.00" y2="661.30" stroke="#e5e5e5" stroke-width="1" /><path d="M493.00,247.50 L494.36,245.74 L495.66,246.33 L497.17,245.60 L499.03,242.72 L500.54,245.95 L501.88,244.04 L503.72,242.66 L504.77,243.49 L506.70,241.70 L507.90,236.73 L510.03,233.18 L511.40,230.04 L512.41,224.45 L514.49,222.72 L515.93,219.05 L517.64,216.47 L518.97,211.78 L520.63,207.27 L521.61,203.94 L523.16,200.39 L525.00,196.70 L526.66,196.91 L528.36,194.83 L529.61,195.04 L531.34,195.57 L532.70,192.10 L534.19,194.45 L535.37,191.87 L536.65,191.40 L538.24,189.55 L539.76,189.51 L541.94,188.34 L543.16,190.27 L544.95,187.70 L546.01,189.00 L547.33,185.47 L548.91,186.44 L550.45,184.27 L552.05,185.43 L553.85,184.63 L555.35,182.51 L556.70,183.30 L557.50,309.60 L575.80,309.60 L577.61,308.35 L578.81,304.19 L580.58,300.02 L581.76,298.74 L583.17,294.81 L584.77,294.23 L587.02,293.07 L588.01,289.55 L589.45,288.71 L591.31,285.06 L592.54,282.20 L594.75,278.52 L596.41,277.95 L597.60,273.85 L599.55,274.08 L600.46,269.79 L602.47,268.13 L603.63,264.70 L605.77,264.26 L607.18,261.92 L608.46,257.51 L610.00,255.80 L611.12,254.83 L613.26,256.73 L615.03,256.57 L616.06,253.31 L617.45,253.54 L619.63,255.31 L620.96,255.49 L622.51,255.00 L624.13,253.31 L625.71,252.63 L627.42,252.57 L628.95,253.79 L629.76,251.26 L631.91,250.98 L633.61,252.35 L634.77,249.69 L636.70,251.80 L638.21,250.84 L639.66,249.87 L640.72,249.70 L642.24,249.85 L644.00,250.00 L645.98,245.51 L647.29,243.26 L649.20,237.95 L650.46,232.39 L651.76,228.32 L653.36,225.81 L655.31,221.32 L656.92,219.31 L658.54,213.03 L660.34,209.84 L661.70,205.80 L663.49,206.72 L664.91,205.03 L666.54,204.46 L667.91,205.63 L669.82,205.24 L671.09,204.84 L672.27,201.82 L673.77,201.31 L675.86,203.15 L676.95,202.54 L678.50,202.67 L680.13,202.50 L681.92,202.22 L683.19,200.04 L684.90,198.89 L686.80,197.93 L688.11,197.53 L689.83,198.74 L691.71,199.21 L692.47,196.69 L694.64,196.32 L695.87,198.41 L697.50,196.70 L697.80,309.60 L715.00,309.60 L716.29,306.20 L718.08,306.06 L719.13,303.36 L720.65,301.88 L722.82,296.86 L723.67,297.08 L725.42,293.80 L726.87,290.17 L728.35,287.07 L729.69,285.84 L731.43,285.34 L733.11,281.20 L734.19,278.67 L736.34,277.93 L737.62,277.61 L739.44,272.89 L740.96,270.48 L742.34,270.09 L743.98,266.92 L745.10,263.20 L746.70,261.70 L747.90,260.02 L749.54,259.36 L751.60,261.96 L752.63,259.64 L754.32,259.06 L755.68,261.33 L757.47,258.73 L758.78,258.50 L760.38,258.85 L761.75,258.64 L763.34,257.00 L764.67,256.48 L766.38,257.97 L768.37,257.89 L770.02,256.73 L771.65,255.65 L772.87,255.00 L774.63,256.56 L776.09,254.69 L777.34,256.61 L779.17,255.50 L780.57,255.91 L781.51,253.44 L783.11,255.38 L785.00,254.00 L786.66,250.67 L788.09,244.94 L789.87,242.80 L791.34,237.67 L792.53,233.96 L794.51,230.64 L796.28,227.83 L797.38,224.70 L799.06,221.11 L800.18,215.86 L801.87,213.25 L803.20,208.43 L805.32,206.00 L806.70,201.70 L808.29,201.16 L809.50,202.86 L811.85,202.65 L812.95,201.01 L814.52,198.38 L816.53,198.21 L817.38,198.78 L818.95,199.30 L821.20,198.89 L822.78,197.35 L823.55,196.97 L825.39,195.42 L826.97,197.88 L828.94,197.45 L830.67,195.97 L831.67,194.45 L833.88,194.71 L835.00,194.00 L836.70,309.60 L855.00,309.60 L856.45,306.00 L857.67,305.78 L859.93,301.46 L861.06,298.83 L862.98,298.60 L864.20,296.25 L865.64,293.61 L867.32,289.88 L868.75,286.50 L870.52,283.95 L871.51,282.05 L873.59,279.49 L874.50,277.99 L875.89,273.63 L878.07,272.90 L879.58,272.06 L880.41,266.45 L882.10,263.49 L883.54,263.36 L885.50,260.41 L886.81,257.85 L888.30,255.80 L889.43,254.73 L891.01,255.09 L893.19,253.81 L894.16,254.04 L896.32,255.11 L897.00,252.14 L899.31,253.19 L900.02,252.57 L902.29,253.69 L903.29,250.19 L905.06,252.41 L906.76,251.94 L908.04,251.37 L909.86,249.89 L911.26,249.38 L912.42,250.46 L913.82,248.29 L915.77,248.73 L917.30,247.38 L918.70,250.05 L920.60,248.10 L921.55,249.33 L923.30,247.50 L924.67,242.62 L926.53,240.55 L928.07,239.64 L929.03,233.60 L931.16,229.80 L932.75,227.45 L934.49,223.47 L935.37,219.84 L936.96,218.83 L938.40,213.15 L940.37,212.99 L941.67,206.43 L943.30,204.00 L944.50,201.30 L946.24,204.46 L948.06,204.36 L949.22,201.36 L951.11,200.46 L952.30,201.14 L953.63,199.55 L955.31,203.06 L957.38,199.38 L958.77,200.94 L959.59,199.42 L961.90,198.11 L963.39,197.18 L964.84,199.64 L965.65,196.46 L967.37,198.25 L968.96,196.32 L970.73,195.88 L971.98,195.08 L973.89,197.15 L975.58,192.97 L976.70,195.00 L977.80,309.60 L995.00,309.60 L996.51,308.51 L997.96,303.70 L999.58,304.13 L1001.39,300.15 L1002.89,297.17 L1004.01,293.83 L1005.33,290.75 L1007.01,286.94 L1008.81,286.05 L1010.64,285.62 L1011.45,280.21 L1013.54,278.68 L1014.80,276.78 L1016.63,274.95 L1017.60,272.38 L1019.53,268.33 L1020.73,264.89 L1022.21,264.85 L1023.90,260.74 L1025.59,257.66 L1027.25,258.48 L1028.62,254.43 L1030.54,249.38 L1031.70,248.30 L1032.88,247.02 L1034.82,249.10 L1036.59,247.28 L1038.04,249.43 L1039.40,247.48 L1040.71,244.74 L1042.13,246.61 L1043.61,244.44 L1045.56,244.71 L1046.65,246.38 L1048.05,243.87 L1050.01,245.57 L1051.18,245.19 L1052.81,243.67 L1054.36,244.21 L1055.97,244.87 L1057.45,242.45 L1058.82,241.55 L1060.54,243.87 L1062.48,242.36 L1063.22,242.44 L1065.55,240.67 L1066.70,241.70 L1068.12,238.32 L1069.58,234.97 L1070.96,231.47 L1073.27,226.55 L1074.79,226.22 L1075.53,222.66 L1077.83,218.29 L1078.70,215.96 L1080.46,212.21 L1081.80,206.80 L1083.64,203.70 L1084.93,201.62 L1086.70,197.50 L1087.80,197.29 L1089.31,198.41 L1091.33,196.43 L1092.59,195.60 L1094.21,195.96 L1095.73,193.51 L1097.30,193.78 L1099.07,194.01 L1100.31,191.80 L1101.79,192.09 L1103.37,191.52 L1104.50,193.33 L1106.41,190.74 L1107.80,194.07 L1109.75,192.94 L1111.22,189.96 L1112.45,191.99 L1113.67,191.04 L1115.09,189.23 L1117.00,189.30 L1117.50,309.60 L1134.30,309.60 L1135.49,308.25 L1137.58,303.21 L1139.18,300.80 L1140.31,298.18 L1141.51,295.40 L1143.46,295.89 L1145.06,290.01 L1146.42,288.17 L1147.85,286.26 L1148.94,284.96 L1150.70,281.71 L1152.74,278.38 L1154.04,275.22 L1155.52,271.44 L1156.58,270.71 L1158.38,268.17 L1159.35,262.64 L1161.30,262.40 L1162.92,261.65 L1164.69,259.45 L1165.99,258.36 L1167.23,259.01 L1168.63,260.01 L1170.13,259.60 L1171.58,260.91 L1173.11,256.85 L1175.28,258.51 L1176.25,255.51 L1178.03,256.07 L1179.44,257.41 L1180.78,257.55 L1182.55,254.47 L1183.64,255.84 L1185.60,256.14 L1186.80,253.70 L1188.72,254.42 L1189.93,251.26 L1191.97,252.66 L1192.69,252.32 L1194.62,251.46 L1195.92,248.14 L1197.27,249.10 L1199.38,250.20 L1200.51,248.73 L1202.50,248.10 L1203.88,249.88 L1205.61,245.41 L1206.55,247.21 L1208.30,245.90 L1210.02,241.07 L1211.15,236.52 L1212.92,233.70 L1214.73,228.71 L1215.98,225.68 L1217.50,220.49 L1218.54,216.62 L1220.67,209.90 L1221.45,208.82 L1222.98,200.76 L1224.80,198.90 L1226.53,198.68 L1228.13,196.21 L1229.36,197.97 L1231.39,194.91 L1232.97,197.92 L1233.90,193.01 L1236.03,195.35 L1237.57,194.12 L1238.48,191.76 L1240.13,191.82 L1241.53,190.97 L1243.71,190.68 L1245.50,190.46 L1246.75,188.30 L1248.14,190.02 L1249.94,188.69 L1251.65,186.54 L1252.58,184.65 L1254.68,189.00 L1256.00,185.90 L1257.50,309.60 L1274.30,309.60 L1275.82,307.13 L1277.08,304.69 L1279.19,301.50 L1280.23,298.91 L1281.96,296.13 L1283.11,295.86 L1285.28,292.90 L1286.47,289.71 L1287.72,289.59 L1289.36,284.40 L1291.15,282.33 L1292.44,280.15 L1294.45,278.64 L1295.61,274.50 L1297.59,273.46 L1298.51,270.30 L1300.42,266.86 L1302.22,264.27 L1303.23,263.81 L1304.63,258.96 L1306.32,258.39 L1307.85,254.84 L1309.74,252.11 L1310.71,250.57 L1312.60,248.50 L1314.43,249.00 L1315.46,248.71 L1317.04,247.18 L1318.78,248.43 L1320.43,247.67 L1322.00,247.00" fill="none" stroke="#9eabbd" stroke-width="0.85"/><path d="M493.00,251.70 L494.37,251.95 L496.66,252.60 L498.21,252.33 L499.60,252.32 L501.83,252.31 L503.46,252.24 L505.00,252.00 L519.70,178.00 L530.00,221.70 L538.30,256.70 L545.80,284.00 L558.30,309.60 L575.80,309.60 L594.20,247.50 L595.63,247.96 L597.34,248.16 L599.15,247.15 L600.60,247.94 L602.42,249.13 L604.01,248.36 L605.46,249.37 L607.12,247.22 L609.11,248.01 L610.37,248.08 L611.92,248.33 L613.54,247.92 L614.85,248.52 L616.99,247.44 L618.21,247.36 L619.86,247.33 L621.49,248.75 L622.95,247.85 L625.21,248.54 L626.69,248.15 L627.65,249.10 L629.75,248.54 L630.97,249.58 L632.97,249.34 L634.42,248.34 L635.70,249.47 L638.01,248.38 L639.04,248.66 L640.41,249.39 L642.50,249.00 L656.70,178.70 L669.00,230.80 L681.70,284.00 L684.00,290.00 L692.50,309.60 L715.00,309.60 L733.00,252.50 L734.38,252.08 L736.17,252.72 L737.73,253.27 L739.06,253.05 L741.38,251.64 L742.85,250.78 L744.78,252.62 L745.58,251.14 L747.85,251.76 L749.59,253.16 L751.20,252.41 L752.61,252.96 L754.39,251.54 L755.72,252.60 L757.68,252.20 L758.68,251.34 L760.13,251.93 L762.16,252.00 L764.14,250.99 L765.38,252.07 L767.36,251.67 L769.10,251.04 L770.41,250.92 L772.07,252.70 L773.98,251.83 L775.52,250.85 L776.88,251.43 L778.25,251.68 L780.00,251.70 L796.70,173.30 L805.00,203.00 L821.70,273.30 L828.30,284.00 L835.00,293.00 L838.30,309.60 L855.00,309.60 L872.50,264.20 L874.37,263.65 L875.65,264.36 L877.13,264.94 L878.94,263.85 L881.01,264.65 L882.00,264.00 L883.86,264.66 L884.94,264.87 L887.04,263.55 L888.13,263.86 L890.32,264.82 L892.22,264.75 L893.56,264.95 L895.22,264.01 L896.61,265.45 L897.96,263.72 L900.27,264.98 L901.80,265.27 L902.86,264.33 L904.53,264.61 L906.73,263.89 L907.49,264.04 L909.61,265.67 L910.68,264.64 L913.18,265.85 L914.28,264.12 L915.70,263.83 L917.11,265.56 L919.20,265.00 L935.00,193.30 L950.00,256.70 L960.00,297.50 L963.30,301.70 L969.20,309.60 L995.00,309.60 L1011.70,255.80 L1013.76,254.98 L1014.57,254.85 L1016.29,256.57 L1017.72,256.37 L1020.11,256.57 L1021.50,256.26 L1023.41,255.35 L1024.81,254.29 L1026.36,256.87 L1027.65,256.60 L1029.79,255.83 L1030.93,256.03 L1032.84,255.17 L1034.15,256.18 L1035.81,255.67 L1037.93,256.47 L1038.92,255.03 L1040.93,256.57 L1042.45,256.88 L1044.06,255.55 L1045.94,255.69 L1047.28,256.73 L1048.59,254.95 L1050.34,256.13 L1052.39,255.05 L1053.93,256.70 L1055.03,256.68 L1057.04,256.81 L1058.08,256.09 L1059.80,256.49 L1061.70,256.00 L1076.70,189.70 L1090.00,238.00 L1102.20,285.00 L1107.40,294.60 L1117.00,309.60 L1134.30,309.60 L1151.70,260.70 L1153.07,260.88 L1154.91,260.05 L1156.80,261.19 L1157.79,261.19 L1159.55,260.70 L1161.79,260.56 L1163.13,259.49 L1164.36,260.85 L1166.35,260.23 L1167.57,259.48 L1169.41,259.57 L1171.42,259.64 L1172.62,260.36 L1173.94,261.25 L1176.00,260.37 L1177.90,260.06 L1179.51,260.81 L1180.64,258.66 L1182.19,258.78 L1184.17,260.82 L1186.16,261.36 L1187.45,259.69 L1189.42,259.50 L1190.73,260.87 L1192.11,259.76 L1194.29,261.47 L1195.02,259.37 L1197.47,260.64 L1198.70,259.80 L1214.30,180.30 L1233.50,257.20 L1240.40,282.40 L1257.00,309.60 L1274.30,309.60 L1293.50,251.00 L1294.74,251.53 L1296.99,252.46 L1298.19,251.37 L1300.38,250.41 L1302.13,249.98 L1303.33,249.97 L1304.92,249.83 L1307.08,249.65 L1308.30,249.65 L1310.00,251.40 L1312.31,249.76 L1313.23,251.29 L1315.42,250.29 L1317.28,250.30 L1318.30,249.40 L1320.53,250.42 L1322.00,250.20" fill="none" stroke="#f3a3c3" stroke-width="0.85"/><line x1="493.30" y1="174.26" x2="493.30" y2="310.10" stroke="#e0609f" stroke-width="1.6" /><line x1="487.00" y1="174.76" x2="493.00" y2="174.76" stroke="#e0609f" stroke-width="1.6" /><line x1="487.00" y1="179.95" x2="493.00" y2="179.95" stroke="#f2b6d2" stroke-width="1.6" /><line x1="487.00" y1="205.88" x2="493.00" y2="205.88" stroke="#c8095c" stroke-width="1.6" /><line x1="487.00" y1="231.81" x2="493.00" y2="231.81" stroke="#c8095c" stroke-width="1.6" /><line x1="487.00" y1="257.74" x2="493.00" y2="257.74" stroke="#c8095c" stroke-width="1.6" /><line x1="487.00" y1="283.67" x2="493.00" y2="283.67" stroke="#c8095c" stroke-width="1.6" /><line x1="487.00" y1="309.60" x2="493.00" y2="309.60" stroke="#c8095c" stroke-width="1.6" /><text x="483.80" y="183.85" font-size="10.8" fill="#a9a9a9" text-anchor="end" font-weight="400" font-family="Liberation Sans">50</text><text x="483.80" y="209.78" font-size="10.8" fill="#333" text-anchor="end" font-weight="400" font-family="Liberation Sans">40</text><text x="483.80" y="235.71" font-size="10.8" fill="#333" text-anchor="end" font-weight="400" font-family="Liberation Sans">30</text><text x="483.80" y="261.64" font-size="10.8" fill="#333" text-anchor="end" font-weight="400" font-family="Liberation Sans">20</text><text x="483.80" y="287.57" font-size="10.8" fill="#333" text-anchor="end" font-weight="400" font-family="Liberation Sans">10</text><text x="483.80" y="313.50" font-size="10.8" fill="#333" text-anchor="end" font-weight="400" font-family="Liberation Sans">0</text><text x="483.80" y="178.66" font-size="10.8" fill="#333" text-anchor="end" font-weight="400" font-family="Liberation Sans">52</text><clipPath id="lvclip"><rect x="493" y="349" width="829" height="138"/></clipPath><path d="M493.00,200.00 L538.70,349.60 L546.50,439.00 L551.70,453.00 L553.50,462.60 L557.00,474.00 L558.70,485.70 L575.20,485.70 L582.20,453.00 L590.90,403.50 L592.60,395.70 L595.12,395.05 L596.35,395.06 L598.64,394.77 L600.70,397.51 L603.00,395.70 L608.30,382.60 L611.47,373.96 L613.50,367.80 L616.08,362.44 L617.99,357.61 L620.46,355.52 L623.00,349.60 L640.00,300.00 L660.00,300.00 L675.20,349.60 L683.00,430.40 L686.50,456.50 L693.50,474.80 L696.00,485.70 L714.30,485.70 L719.60,451.30 L724.80,432.20 L731.20,392.70 L733.93,392.39 L736.12,393.10 L737.61,397.30 L740.45,395.27 L742.30,396.80 L743.74,391.85 L746.00,384.86 L748.08,379.48 L750.08,374.04 L752.50,367.40 L754.16,361.07 L756.68,358.49 L758.22,354.36 L760.60,349.60 L780.00,300.00 L800.00,300.00 L817.40,349.60 L825.50,427.20 L829.50,439.40 L836.60,461.70 L838.30,485.70 L854.30,485.70 L859.00,465.80 L866.00,423.20 L871.10,405.00 L872.10,391.70 L874.50,392.07 L875.64,392.35 L878.45,390.46 L880.02,392.66 L882.23,390.34 L884.24,392.74 L886.30,391.70 L889.40,377.50 L891.52,373.88 L894.40,368.40 L896.03,361.77 L897.87,355.92 L900.50,349.60 L920.00,300.00 L940.00,300.00 L954.30,349.60 L963.40,446.50 L971.50,467.80 L975.60,485.70 L993.80,485.70 L999.90,459.50 L1014.60,383.10 L1016.69,382.04 L1019.11,384.12 L1021.05,382.77 L1022.34,384.14 L1024.93,383.14 L1027.00,383.10 L1030.60,370.80 L1032.82,364.16 L1034.62,358.78 L1036.83,356.32 L1039.30,349.60 L1060.00,300.00 L1080.00,300.00 L1097.10,349.60 L1103.30,418.80 L1108.20,437.30 L1116.80,466.80 L1118.00,485.70 L1134.10,485.70 L1151.30,393.00 L1152.87,394.51 L1154.82,394.51 L1157.48,395.76 L1159.94,396.44 L1161.10,396.07 L1163.60,396.70 L1165.40,388.64 L1167.30,382.96 L1169.80,375.70 L1171.60,370.68 L1173.84,366.17 L1176.33,359.82 L1178.71,354.53 L1180.90,349.60 L1200.00,300.00 L1220.00,300.00 L1236.30,349.60 L1244.90,438.50 L1257.20,485.70 L1274.50,485.70 L1285.60,418.80 L1293.00,379.40 L1295.38,378.88 L1296.90,379.62 L1299.52,381.16 L1301.62,378.95 L1303.80,382.35 L1305.30,380.60 L1307.26,375.80 L1309.44,369.06 L1311.46,362.95 L1314.06,360.71 L1315.71,355.63 L1317.60,349.60 L1330.00,320.00" fill="none" stroke="#ff5722" stroke-width="1.4" clip-path="url(#lvclip)"/><line x1="493.30" y1="349.60" x2="493.30" y2="485.70" stroke="#ff8a5c" stroke-width="1.5" /><line x1="487.00" y1="349.60" x2="493.00" y2="349.60" stroke="#ff6a30" stroke-width="1.5" /><line x1="487.00" y1="368.38" x2="493.00" y2="368.38" stroke="#ff6a30" stroke-width="1.5" /><line x1="487.00" y1="391.84" x2="493.00" y2="391.84" stroke="#ff6a30" stroke-width="1.5" /><line x1="487.00" y1="415.31" x2="493.00" y2="415.31" stroke="#ff6a30" stroke-width="1.5" /><line x1="487.00" y1="438.77" x2="493.00" y2="438.77" stroke="#ff6a30" stroke-width="1.5" /><line x1="487.00" y1="462.24" x2="493.00" y2="462.24" stroke="#ff6a30" stroke-width="1.5" /><line x1="487.00" y1="485.70" x2="493.00" y2="485.70" stroke="#ff6a30" stroke-width="1.5" /><text x="483.80" y="372.27" font-size="10.8" fill="#333" text-anchor="end" font-weight="400" font-family="Liberation Sans">25</text><text x="483.80" y="395.74" font-size="10.8" fill="#333" text-anchor="end" font-weight="400" font-family="Liberation Sans">20</text><text x="483.80" y="419.20" font-size="10.8" fill="#333" text-anchor="end" font-weight="400" font-family="Liberation Sans">15</text><text x="483.80" y="442.67" font-size="10.8" fill="#333" text-anchor="end" font-weight="400" font-family="Liberation Sans">10</text><text x="483.80" y="466.13" font-size="10.8" fill="#333" text-anchor="end" font-weight="400" font-family="Liberation Sans">5</text><text x="483.80" y="489.60" font-size="10.8" fill="#333" text-anchor="end" font-weight="400" font-family="Liberation Sans">0</text><path d="M493.00,525.80 L557.00,525.80 L557.00,661.30 L574.80,661.30 L574.80,525.80 L697.40,525.80 L697.40,661.30 L714.40,661.30 L714.40,525.80 L837.30,525.80 L837.30,661.30 L854.70,661.30 L854.70,525.80 L977.30,525.80 L977.30,661.30 L994.30,661.30 L994.30,525.80 L1117.30,525.80 L1117.30,661.30 L1134.30,661.30 L1134.30,525.80 L1257.30,525.80 L1257.30,661.30 L1274.30,661.30 L1274.30,525.80 L1322.00,525.80" fill="none" stroke="#bcd9ae" stroke-width="1.1"/><line x1="493.30" y1="525.80" x2="493.30" y2="661.30" stroke="#7dbb64" stroke-width="1.5" /><line x1="487.00" y1="525.80" x2="493.00" y2="525.80" stroke="#6aac4f" stroke-width="1.6" /><line x1="487.00" y1="661.30" x2="493.00" y2="661.30" stroke="#6aac4f" stroke-width="1.6" /><text x="484.00" y="529.50" font-size="10.2" fill="#333" text-anchor="end" font-weight="400" font-family="Liberation Sans">ACTIVE</text><text x="484.00" y="665.00" font-size="10.2" fill="#333" text-anchor="end" font-weight="400" font-family="Liberation Sans">INACTIVE</text><line x1="493.00" y1="666.00" x2="1322.00" y2="666.00" stroke="#6e6e6e" stroke-width="2.2" /><line x1="577.40" y1="666.00" x2="577.40" y2="670.50" stroke="#6e6e6e" stroke-width="1.5" /><text x="577.40" y="680.00" font-size="10.2" fill="#333" text-anchor="middle" font-weight="400" font-family="Liberation Sans">03 AM</text><line x1="681.05" y1="666.00" x2="681.05" y2="670.50" stroke="#6e6e6e" stroke-width="1.5" /><text x="681.05" y="680.00" font-size="10.2" fill="#333" text-anchor="middle" font-weight="400" font-family="Liberation Sans">04 AM</text><line x1="784.70" y1="666.00" x2="784.70" y2="670.50" stroke="#6e6e6e" stroke-width="1.5" /><text x="784.70" y="680.00" font-size="10.2" fill="#333" text-anchor="middle" font-weight="400" font-family="Liberation Sans">05 AM</text><line x1="888.35" y1="666.00" x2="888.35" y2="670.50" stroke="#6e6e6e" stroke-width="1.5" /><text x="888.35" y="680.00" font-size="10.2" fill="#333" text-anchor="middle" font-weight="400" font-family="Liberation Sans">06 AM</text><line x1="992.00" y1="666.00" x2="992.00" y2="670.50" stroke="#6e6e6e" stroke-width="1.5" /><text x="992.00" y="680.00" font-size="10.2" fill="#333" text-anchor="middle" font-weight="400" font-family="Liberation Sans">07 AM</text><line x1="1095.65" y1="666.00" x2="1095.65" y2="670.50" stroke="#6e6e6e" stroke-width="1.5" /><text x="1095.65" y="680.00" font-size="10.2" fill="#333" text-anchor="middle" font-weight="400" font-family="Liberation Sans">08 AM</text><line x1="1199.30" y1="666.00" x2="1199.30" y2="670.50" stroke="#6e6e6e" stroke-width="1.5" /><text x="1199.30" y="680.00" font-size="10.2" fill="#333" text-anchor="middle" font-weight="400" font-family="Liberation Sans">09 AM</text><line x1="1302.95" y1="666.00" x2="1302.95" y2="670.50" stroke="#6e6e6e" stroke-width="1.5" /><text x="1302.95" y="680.00" font-size="10.2" fill="#333" text-anchor="middle" font-weight="400" font-family="Liberation Sans">10 AM</text><line x1="493.50" y1="666.00" x2="493.50" y2="670.50" stroke="#6e6e6e" stroke-width="1.5" /><line x1="1321.50" y1="666.00" x2="1321.50" y2="670.50" stroke="#6e6e6e" stroke-width="1.5" /><path d="M506.87,738.8 L507.71,751.3 M527.50,743.0 L527.13,756.1 M547.08,738.7 L548.78,749.6 M548.88,734.5 L546.29,757.7 M557.55,735.6 L556.17,752.7 M560.78,734.2 L563.06,747.3 M576.30,742.6 L574.51,752.4 M581.65,741.1 L584.41,756.1 M583.59,737.0 L582.87,746.0 M598.49,741.6 L599.08,752.2 M611.22,736.7 L611.21,751.9 M618.11,741.3 L615.92,756.2 M625.09,740.2 L623.43,745.0 M627.57,738.4 L627.01,754.1 M634.44,744.3 L636.18,757.5 M665.40,740.7 L664.45,747.5 M688.43,736.0 L690.25,750.4 M696.34,736.1 L695.03,751.9 M705.68,736.4 L703.47,748.3 M709.35,744.5 L706.76,748.5 M713.78,735.1 L711.92,755.7 M716.56,744.4 L716.47,754.1 M726.21,737.5 L727.39,748.6 M727.87,739.0 L729.26,749.4 M734.06,737.6 L736.95,749.8 M735.50,733.8 L732.50,756.5 M742.93,743.7 L741.65,747.5 M746.83,742.0 L749.78,745.9 M756.81,743.9 L758.95,754.6 M761.24,737.8 L759.51,747.4 M763.41,735.1 L761.42,751.3 M767.03,739.2 L766.55,751.4 M776.18,742.2 L775.71,749.8 M780.67,740.3 L781.88,747.2 M786.63,738.9 L789.60,746.7 M794.98,744.8 L796.41,751.3 M809.79,740.2 L810.76,754.6 M813.60,745.0 L811.33,751.5 M820.67,742.0 L822.01,746.8 M829.79,735.1 L829.80,748.3 M848.15,735.4 L848.90,755.2 M856.37,738.8 L858.04,750.7 M865.42,739.0 L864.51,751.3 M868.82,734.5 L871.16,754.4 M875.53,742.0 L873.56,749.8 M888.38,740.5 L888.89,751.5 M896.52,744.6 L898.31,750.3 M904.97,736.2 L902.80,756.3 M915.31,742.6 L916.67,747.5 M918.74,739.2 L921.48,745.3 M935.10,734.0 L934.47,751.5 M938.18,738.8 L937.60,753.7 M941.77,736.0 L941.53,746.6 M957.19,733.6 L956.25,756.0 M972.86,733.9 L973.42,747.4 M974.81,735.1 L976.02,747.3 M984.85,743.3 L983.33,749.2 M992.01,740.5 L994.00,752.4 M997.22,739.8 L999.63,746.3 M1020.57,738.2 L1020.21,749.9 M1060.77,744.3 L1059.19,747.5 M1062.77,736.1 L1065.75,754.7 M1073.29,734.7 L1072.49,752.9 M1088.42,741.0 L1090.85,752.8 M1095.98,744.4 L1096.43,745.1 M1097.71,735.2 L1099.10,749.2 M1105.17,740.7 L1107.87,753.7 M1109.77,735.2 L1112.12,748.5 M1117.62,744.4 L1115.11,746.2 M1133.78,742.1 L1134.36,752.7 M1153.51,738.2 L1154.40,749.9 M1155.93,742.1 L1154.77,747.4 M1161.74,743.2 L1162.34,753.3 M1183.90,741.3 L1183.14,753.8 M1197.20,735.1 L1197.73,753.5 M1203.46,741.6 L1204.76,749.2 M1208.97,741.6 L1207.09,747.1 M1211.76,744.5 L1211.45,746.2 M1234.40,733.1 L1233.91,751.6 M1242.21,743.0 L1242.54,757.7 M1248.45,733.4 L1245.92,751.1 M1252.85,736.9 L1252.67,752.9 M1255.23,743.4 L1256.83,754.1 M1265.21,743.1 L1267.17,756.1 M1267.75,735.2 L1269.85,754.9 M1275.08,737.8 L1275.93,746.7 M1278.33,733.4 L1277.73,756.0 M1286.07,740.2 L1284.61,756.5 M1291.09,738.3 L1291.20,755.5 M1294.92,742.1 L1297.44,748.4 M1300.76,740.1 L1299.88,755.3 M1307.69,741.5 L1308.34,755.8 M1315.17,742.2 L1313.61,745.9" fill="none" stroke="#6a7fa0" stroke-width="1"/><path d="M496.42,732.4 L497.09,757.5 M501.26,734.5 L502.70,752.7 M506.81,736.9 L507.48,758.9 M510.61,731.1 L508.65,753.9 M514.88,735.7 L515.60,754.6 M520.35,736.7 L518.15,754.9 M523.46,734.3 L522.52,752.1 M527.06,734.9 L528.05,749.1 M536.10,735.3 L537.76,754.8 M545.74,739.5 L546.30,751.8 M549.77,735.3 L551.15,748.0 M559.38,737.8 L558.46,758.5 M562.26,731.0 L560.48,756.5 M566.16,731.9 L566.43,754.1 M572.99,735.4 L573.99,758.5 M581.70,739.6 L581.54,750.5 M586.24,731.3 L586.00,756.1 M592.84,735.4 L592.10,755.9 M602.31,737.3 L602.39,757.6 M616.20,731.7 L616.39,758.2 M624.04,739.1 L625.14,752.0 M627.58,732.0 L625.92,753.4 M631.85,739.2 L632.32,756.9 M636.35,731.9 L637.26,748.2 M639.32,739.5 L637.26,751.2 M667.34,735.0 L666.73,749.3 M670.75,732.9 L669.34,757.6 M677.74,733.5 L677.40,751.8 M686.16,738.3 L685.15,750.7 M688.80,734.0 L686.55,754.0 M693.01,731.2 L693.72,757.9 M695.92,738.5 L693.93,756.5 M702.15,735.4 L701.05,755.8 M714.48,737.1 L715.21,749.6 M716.08,739.5 L718.56,758.8 M722.10,738.5 L720.61,754.5 M725.03,736.2 L723.32,749.3 M731.71,734.8 L733.45,756.6 M738.22,737.2 L736.24,753.4 M746.81,731.9 L749.20,755.6 M751.45,739.6 L749.20,753.7 M757.20,732.2 L757.36,754.8 M763.54,731.5 L765.87,756.1 M767.62,731.7 L767.80,753.0 M775.73,739.3 L776.49,758.2 M780.12,735.2 L782.16,754.1 M783.29,739.7 L781.72,754.3 M789.64,732.5 L790.34,750.3 M798.79,737.3 L799.43,753.7 M805.91,734.5 L807.43,752.9 M807.58,734.1 L806.06,754.3 M814.37,734.9 L812.50,759.0 M821.45,732.0 L822.35,750.6 M824.50,738.0 L824.17,751.8 M830.22,736.3 L830.77,750.7 M833.18,732.8 L833.71,755.1 M836.98,731.2 L837.32,755.5 M840.89,734.8 L843.35,749.7 M843.86,732.8 L842.40,752.3 M849.26,738.1 L848.48,751.2 M851.55,731.8 L851.16,756.5 M855.84,733.8 L856.06,752.5 M860.94,735.5 L860.70,753.2 M864.50,731.1 L865.05,758.8 M867.81,731.7 L866.98,756.8 M873.76,734.9 L874.77,751.8 M876.92,733.2 L878.96,753.9 M880.70,735.0 L878.48,755.0 M885.94,738.0 L885.42,749.8 M888.82,735.4 L886.54,756.7 M894.03,735.8 L891.58,754.0 M898.82,731.7 L900.91,752.6 M902.51,738.9 L903.71,758.2 M910.12,736.9 L908.67,756.3 M924.24,732.6 L926.69,756.5 M926.96,731.5 L926.57,757.8 M931.69,733.4 L929.53,750.6 M933.94,736.6 L934.71,749.2 M939.57,731.7 L939.50,755.3 M944.13,737.3 L944.41,752.7 M949.10,732.5 L946.98,753.2 M956.36,735.2 L953.90,758.2 M965.35,732.4 L966.27,755.3 M968.73,738.9 L966.63,758.6 M972.63,733.7 L973.82,754.4 M982.26,735.4 L983.52,750.2 M985.71,732.4 L987.00,749.0 M990.20,739.2 L988.59,748.9 M996.62,740.0 L995.97,753.9 M1002.41,738.3 L1002.29,749.3 M1009.46,732.9 L1008.96,756.1 M1014.60,731.5 L1013.30,752.1 M1026.66,734.9 L1028.70,758.3 M1034.98,734.6 L1035.49,751.0 M1037.56,735.1 L1036.64,755.1 M1047.56,738.7 L1049.30,755.6 M1052.72,736.5 L1052.44,751.2 M1056.65,733.9 L1058.00,748.0 M1062.87,736.9 L1063.88,751.2 M1068.38,734.2 L1070.55,755.5 M1074.40,733.8 L1073.51,757.5 M1076.57,731.8 L1077.86,757.5 M1082.59,737.6 L1084.37,757.8 M1086.90,733.4 L1086.01,752.0 M1089.84,738.6 L1089.79,750.8 M1101.36,739.4 L1100.54,753.2 M1107.48,736.8 L1105.13,752.8 M1110.36,738.7 L1109.70,749.4 M1117.63,738.0 L1120.06,758.7 M1127.63,731.3 L1128.51,748.3 M1138.10,735.1 L1139.08,757.4 M1141.37,733.6 L1141.53,752.0 M1143.65,733.7 L1142.43,758.1 M1154.36,734.2 L1154.69,755.3 M1161.88,737.6 L1159.92,750.0 M1165.30,733.6 L1165.29,749.2 M1167.91,735.5 L1167.59,754.0 M1183.93,738.4 L1183.60,748.3 M1187.55,737.0 L1188.98,755.6 M1190.92,736.3 L1190.95,754.8 M1193.09,736.0 L1193.61,749.6 M1207.55,735.8 L1206.70,753.5 M1213.11,739.0 L1214.33,751.2 M1225.94,731.8 L1224.48,755.2 M1232.56,736.0 L1234.16,751.3 M1238.24,733.1 L1240.52,751.1 M1243.77,735.6 L1242.34,758.4 M1248.42,736.0 L1246.67,758.8 M1250.90,739.2 L1249.84,750.3 M1260.98,737.9 L1259.23,756.6 M1264.15,736.6 L1262.02,757.5 M1267.84,733.7 L1265.47,748.4 M1271.20,739.4 L1269.17,751.2 M1286.13,732.2 L1284.62,755.1 M1300.68,734.4 L1302.59,755.1 M1311.73,732.9 L1312.14,748.2 M1319.08,739.4 L1321.01,752.2" fill="none" stroke="#e06a9a" stroke-width="1"/><path d="M496.19,734.6 L494.36,755.3 M496.07,732.9 L493.57,757.9 M500.16,734.3 L502.29,753.9 M504.02,732.0 L502.38,756.7 M508.15,733.7 L505.81,758.5 M508.77,732.3 L506.78,755.8 M511.48,731.2 L513.76,756.3 M510.90,734.7 L512.64,754.0 M516.05,734.8 L517.39,758.3 M520.26,732.7 L517.87,753.8 M519.50,732.7 L520.32,756.1 M524.16,732.0 L521.72,755.2 M529.03,731.9 L527.71,757.6 M531.32,734.8 L530.46,754.2 M537.22,733.1 L535.71,757.9 M536.87,733.3 L538.16,752.2 M542.51,734.6 L544.24,758.0 M542.77,732.0 L543.78,752.2 M544.83,732.2 L543.74,756.6 M549.35,734.2 L551.72,757.8 M548.82,732.1 L549.70,753.9 M552.97,733.3 L554.86,754.5 M553.24,731.5 L554.77,752.0 M559.60,731.2 L561.48,758.2 M561.55,733.8 L562.56,758.6 M562.48,733.9 L564.42,755.9 M565.06,734.8 L567.29,756.1 M566.64,733.3 L564.14,755.7 M569.37,733.4 L570.60,758.6 M570.08,731.9 L568.64,758.5 M572.99,732.6 L574.05,758.2 M576.99,733.2 L574.74,757.5 M577.34,733.3 L579.16,758.9 M582.08,731.8 L584.07,756.1 M581.87,733.9 L580.26,758.0 M585.23,732.0 L582.90,758.1 M584.52,734.2 L585.48,752.8 M589.53,732.7 L590.46,755.1 M590.01,734.8 L590.98,754.6 M594.68,734.8 L592.60,756.7 M598.14,733.6 L600.46,752.9 M601.96,733.2 L599.88,757.2 M602.63,731.2 L603.89,753.0 M606.75,733.4 L605.69,756.8 M606.10,731.8 L604.98,754.9 M609.25,731.8 L607.48,753.8 M610.60,732.8 L608.37,754.9 M613.24,734.0 L612.26,753.6 M613.20,734.1 L614.34,753.5 M616.15,733.5 L618.30,752.4 M623.09,734.4 L620.70,755.1 M622.54,734.1 L623.88,754.9 M624.77,732.9 L626.09,757.3 M629.03,731.7 L627.87,754.8 M633.89,732.6 L632.68,753.3 M636.25,731.2 L637.59,755.0 M638.90,734.8 L641.26,752.2 M645.59,734.0 L646.69,757.1 M649.59,734.3 L650.98,755.5 M649.53,731.2 L651.95,753.2 M652.35,734.5 L650.05,755.1 M653.86,731.0 L656.36,753.4 M657.29,734.9 L655.32,758.5 M656.13,732.2 L655.14,753.5 M662.03,733.5 L660.44,752.3 M665.87,733.7 L663.67,752.8 M665.92,733.6 L667.40,757.4 M670.60,731.9 L668.77,754.5 M671.09,732.8 L672.29,753.8 M673.98,734.1 L675.60,754.8 M675.87,733.1 L674.56,756.5 M680.82,734.1 L679.76,756.9 M684.89,734.4 L683.48,754.0 M687.92,734.2 L685.44,754.5 M690.02,731.1 L692.49,753.3 M695.09,734.2 L692.74,753.7 M693.11,734.3 L694.78,755.9 M698.05,733.5 L699.48,754.1 M702.76,733.4 L705.14,752.2 M705.92,734.7 L707.05,753.3 M705.68,732.1 L707.02,758.6 M710.41,734.4 L708.34,756.4 M712.20,731.6 L714.63,758.3 M716.05,731.1 L717.16,752.7 M716.06,732.4 L717.08,758.4 M722.76,732.9 L724.53,755.8 M725.53,733.4 L724.51,752.4 M729.18,733.3 L730.76,756.5 M729.16,734.3 L731.43,754.0 M732.90,733.1 L730.42,755.1 M737.80,732.5 L738.62,754.6 M743.04,733.9 L744.75,757.8 M743.73,733.7 L742.18,752.8 M746.61,734.9 L744.97,755.3 M746.12,732.7 L744.45,756.4 M750.02,734.5 L751.91,753.6 M755.33,734.7 L757.54,754.8 M755.59,733.1 L757.52,753.4 M760.25,731.9 L762.53,757.8 M764.37,732.5 L763.16,753.6 M767.20,732.7 L769.02,753.2 M772.09,731.5 L774.18,754.9 M771.79,731.4 L770.00,755.7 M774.90,731.8 L777.10,752.7 M776.55,733.7 L778.34,754.0 M779.69,731.6 L778.34,758.4 M783.69,731.3 L785.17,753.9 M783.52,734.8 L784.52,755.3 M787.60,731.4 L789.93,756.9 M788.53,732.3 L786.05,752.8 M790.78,733.2 L792.02,756.1 M796.28,733.2 L797.16,757.2 M800.19,731.3 L798.95,752.6 M805.41,733.7 L804.49,754.9 M803.82,732.3 L805.50,758.8 M807.81,732.7 L806.62,752.7 M808.53,733.4 L806.80,754.0 M813.21,731.4 L814.86,758.5 M815.85,731.0 L814.24,757.0 M820.93,732.2 L823.09,755.9 M823.81,733.0 L822.40,752.6 M830.89,731.4 L832.04,753.8 M830.90,731.8 L832.51,754.4 M832.89,733.9 L834.31,753.9 M837.96,732.9 L839.80,752.4 M842.87,731.9 L841.89,758.4 M843.87,732.4 L842.06,755.9 M848.50,731.8 L846.28,757.1 M847.80,732.0 L849.99,753.0 M851.41,733.1 L853.62,755.2 M856.08,732.4 L853.80,753.2 M861.75,734.4 L863.02,753.4 M860.86,732.5 L862.27,752.1 M864.20,732.5 L865.53,752.0 M869.06,734.1 L868.08,756.7 M873.56,733.8 L871.30,756.5 M876.64,734.0 L877.57,755.8 M879.73,734.7 L881.93,756.4 M885.51,735.0 L883.27,752.6 M890.08,732.0 L888.22,756.7 M888.07,734.3 L889.99,756.7 M892.88,731.0 L891.49,752.3 M893.16,732.5 L892.07,757.8 M898.78,731.6 L900.57,755.0 M898.41,732.6 L896.83,752.2 M902.38,732.1 L903.25,754.6 M905.68,731.6 L906.97,754.5 M910.18,735.0 L912.40,757.3 M915.29,732.4 L916.35,752.5 M918.00,732.1 L920.28,753.7 M923.70,732.4 L925.03,757.2 M927.56,734.3 L928.50,752.1 M931.15,731.8 L929.56,756.8 M935.24,731.2 L937.51,752.5 M939.61,731.4 L941.73,752.6 M937.96,734.4 L939.90,753.3 M941.96,733.5 L940.89,755.1 M943.57,734.4 L941.28,757.9 M948.32,732.9 L949.29,758.1 M948.85,732.5 L949.70,757.8 M953.00,732.8 L955.35,752.5 M955.53,731.5 L954.42,758.0 M960.13,732.0 L961.20,756.8 M959.29,734.8 L957.83,756.3 M964.14,733.5 L966.56,754.0 M968.42,733.1 L970.49,754.1 M967.73,732.2 L969.88,757.0 M971.84,731.4 L972.92,754.7 M975.66,731.6 L977.80,752.0 M982.89,732.2 L984.76,756.5 M985.37,731.3 L987.16,756.4 M984.82,734.7 L983.50,758.3 M987.97,734.4 L986.36,753.7 M988.20,734.8 L989.29,754.5 M993.08,733.0 L994.76,754.8 M992.24,733.3 L989.92,753.8 M997.26,734.0 L999.41,752.5 M997.76,732.0 L999.78,754.0 M1001.13,732.8 L1002.31,757.0 M1005.72,731.9 L1006.52,754.6 M1004.40,735.0 L1006.35,754.2 M1010.87,731.9 L1008.72,758.9 M1009.09,733.1 L1006.85,755.4 M1013.13,732.8 L1010.89,753.9 M1018.72,731.3 L1017.55,752.9 M1017.30,732.8 L1015.79,758.7 M1022.15,733.6 L1023.97,756.5 M1022.55,732.4 L1024.13,758.7 M1027.02,732.8 L1029.22,752.6 M1032.94,733.0 L1032.11,755.0 M1038.37,731.8 L1039.77,754.0 M1039.00,734.8 L1040.24,756.9 M1043.59,731.5 L1042.50,756.3 M1048.78,731.8 L1050.09,755.8 M1052.89,732.7 L1054.93,754.5 M1052.83,734.5 L1053.79,755.0 M1054.91,732.5 L1052.67,755.7 M1060.10,732.3 L1058.27,757.8 M1063.41,734.1 L1064.71,755.6 M1068.98,733.8 L1066.79,757.3 M1068.90,733.4 L1070.27,752.8 M1072.89,733.1 L1071.45,755.1 M1078.11,731.3 L1080.31,756.0 M1077.63,734.5 L1076.31,758.6 M1081.93,733.0 L1080.18,754.9 M1087.54,734.0 L1089.14,754.6 M1086.65,732.4 L1084.53,752.8 M1090.71,732.8 L1091.54,755.8 M1095.64,734.1 L1097.36,757.8 M1099.24,731.6 L1101.23,755.7 M1099.43,732.1 L1097.10,755.5 M1102.64,734.5 L1100.79,755.8 M1104.98,731.9 L1104.11,756.2 M1109.67,733.8 L1112.16,752.4 M1113.25,733.6 L1114.26,753.2 M1117.26,731.8 L1115.66,755.2 M1124.92,735.0 L1122.62,756.8 M1127.65,731.8 L1125.17,757.1 M1128.96,732.3 L1130.73,758.0 M1133.24,731.3 L1131.82,758.6 M1132.20,732.6 L1130.41,757.3 M1138.33,734.6 L1139.92,754.2 M1138.07,731.7 L1136.24,756.7 M1141.27,732.1 L1140.08,754.1 M1145.47,732.4 L1147.36,756.9 M1149.24,731.9 L1150.36,752.2 M1148.45,734.9 L1146.29,753.1 M1152.66,731.9 L1154.62,753.3 M1157.45,733.7 L1158.91,753.2 M1157.92,731.3 L1155.42,757.3 M1162.58,731.7 L1163.49,757.7 M1162.76,732.9 L1164.91,754.9 M1165.04,732.4 L1162.60,756.5 M1164.75,734.1 L1167.06,755.7 M1169.94,733.3 L1171.66,758.4 M1169.48,731.6 L1171.39,754.2 M1173.52,733.9 L1171.94,753.6 M1177.81,734.7 L1176.76,758.1 M1177.66,733.2 L1176.63,758.6 M1181.95,734.1 L1179.92,752.9 M1186.94,733.4 L1189.27,758.0 M1190.38,735.0 L1188.43,755.3 M1191.16,734.0 L1192.92,755.8 M1193.10,732.9 L1192.02,757.0 M1193.42,732.5 L1194.96,755.0 M1199.06,734.4 L1200.85,758.0 M1198.36,733.2 L1196.42,752.4 M1202.44,732.0 L1201.44,757.3 M1203.87,731.8 L1202.85,752.8 M1207.21,734.4 L1204.93,758.1 M1208.52,732.6 L1207.59,752.6 M1213.83,734.7 L1212.25,754.1 M1217.51,732.3 L1219.82,755.2 M1222.84,731.6 L1221.45,752.2 M1226.16,731.3 L1224.46,756.0 M1226.30,732.3 L1224.07,757.0 M1230.46,733.6 L1228.99,752.6 M1233.82,734.7 L1235.40,756.2 M1232.63,731.9 L1231.21,756.6 M1237.51,733.9 L1235.84,753.9 M1239.81,731.6 L1238.91,755.7 M1239.58,733.2 L1238.46,752.8 M1243.17,732.0 L1241.47,754.5 M1241.82,732.6 L1239.78,757.7 M1245.95,733.1 L1245.04,753.4 M1246.62,734.5 L1244.24,758.1 M1251.53,734.8 L1250.18,756.4 M1254.99,733.6 L1253.56,752.2 M1260.34,734.6 L1261.90,756.5 M1261.04,732.9 L1263.51,758.5 M1265.69,734.2 L1267.15,755.5 M1267.97,733.0 L1269.74,754.2 M1271.79,733.5 L1270.12,754.4 M1272.11,734.2 L1270.71,753.5 M1275.73,731.0 L1277.94,752.6 M1275.23,732.7 L1276.62,755.8 M1278.21,731.0 L1275.86,753.1 M1279.21,734.3 L1277.86,757.8 M1281.72,734.2 L1279.30,755.3 M1286.04,733.6 L1284.41,753.9 M1286.72,734.2 L1284.63,756.0 M1290.73,732.6 L1292.30,752.7 M1295.01,733.0 L1296.79,756.6 M1295.32,734.8 L1292.86,755.0 M1299.64,731.8 L1300.84,753.9 M1301.05,733.8 L1298.83,755.4 M1304.52,731.2 L1303.45,757.4 M1303.44,734.3 L1305.76,753.6 M1307.10,733.2 L1307.96,754.1 M1310.72,733.8 L1308.94,756.4 M1316.19,732.9 L1314.76,754.4 M1320.05,731.7 L1318.76,755.5" fill="none" stroke="#ff7d4a" stroke-width="1.05"/><path d="M493.5,759 L493.5,730.5 L494.50,730.5 L494.50,759 L495.00,759 L495.00,730.5 L498.50,730.5 L498.50,759 L499.00,759 L499.00,730.5 L503.50,730.5 L503.50,759 L504.00,759 L504.00,730.5 L506.50,730.5 L506.50,759 L507.00,759 L507.00,730.5 L510.50,730.5 L510.50,759 L511.00,759 L511.00,730.5 L513.50,730.5 L513.50,759 L514.00,759 L514.00,730.5 L518.50,730.5 L518.50,759 L519.00,759 L519.00,730.5 L522.50,730.5 L522.50,759 L523.00,759 L523.00,730.5 L526.50,730.5 L526.50,759 L527.00,759 L527.00,730.5 L530.50,730.5 L530.50,759 L532.50,759 L532.50,730.5 L535.50,730.5 L535.50,759 L536.00,759 L536.00,730.5 L540.50,730.5 L540.50,759 L541.00,759 L541.00,730.5 L544.50,730.5 L544.50,759 L545.00,759 L545.00,730.5 L548.50,730.5 L548.50,759 L549.00,759 L549.00,730.5 L552.50,730.5 L552.50,759 L553.00,759 L553.00,730.5 L557.50,730.5 L557.50,759 L558.00,759 L558.00,730.5 L560.50,730.5 L560.50,759 L561.00,759 L561.00,730.5 L564.50,730.5 L564.50,759 L565.00,759 L565.00,730.5 L568.50,730.5 L568.50,759 L569.00,759 L569.00,730.5 L571.50,730.5 L571.50,759 L572.00,759 L572.00,730.5 L575.50,730.5 L575.50,759 L576.00,759 L576.00,730.5 L579.50,730.5 L579.50,759 L580.00,759 L580.00,730.5 L583.50,730.5 L583.50,759 L584.00,759 L584.00,730.5 L588.50,730.5 L588.50,759 L589.00,759 L589.00,730.5 L592.50,730.5 L592.50,759 L593.00,759 L593.00,730.5 L597.50,730.5 L597.50,759 L598.00,759 L598.00,730.5 L601.50,730.5 L601.50,759 L602.00,759 L602.00,730.5 L604.50,730.5 L604.50,759 L605.00,759 L605.00,730.5 L608.50,730.5 L608.50,759 L609.00,759 L609.00,730.5 L612.50,730.5 L612.50,759 L613.00,759 L613.00,730.5 L615.50,730.5 L615.50,759 L616.00,759 L616.00,730.5 L620.50,730.5 L620.50,759 L621.00,759 L621.00,730.5 L623.50,730.5 L623.50,759 L624.00,759 L624.00,730.5 L627.50,730.5 L627.50,759 L628.00,759 L628.00,730.5 L631.50,730.5 L631.50,759 L632.00,759 L632.00,730.5 L634.50,730.5 L634.50,759 L635.00,759 L635.00,730.5 L637.50,730.5 L637.50,759 L640.50,759 L640.50,730.5 L643.50,730.5 L643.50,759 L644.00,759 L644.00,730.5 L647.50,730.5 L647.50,759 L648.00,759 L648.00,730.5 L651.50,730.5 L651.50,759 L652.00,759 L652.00,730.5 L655.50,730.5 L655.50,759 L656.00,759 L656.00,730.5 L660.50,730.5 L660.50,759 L661.00,759 L661.00,730.5 L664.50,730.5 L664.50,759 L665.00,759 L665.00,730.5 L668.50,730.5 L668.50,759 L669.00,759 L669.00,730.5 L671.50,730.5 L671.50,759 L672.00,759 L672.00,730.5 L675.50,730.5 L675.50,759 L676.00,759 L676.00,730.5 L679.50,730.5 L679.50,759 L680.00,759 L680.00,730.5 L683.50,730.5 L683.50,759 L684.00,759 L684.00,730.5 L687.50,730.5 L687.50,759 L689.50,759 L689.50,730.5 L692.50,730.5 L692.50,759 L693.00,759 L693.00,730.5 L695.50,730.5 L695.50,759 L696.00,759 L696.00,730.5 L700.50,730.5 L700.50,759 L701.00,759 L701.00,730.5 L704.50,730.5 L704.50,759 L705.00,759 L705.00,730.5 L708.50,730.5 L708.50,759 L709.00,759 L709.00,730.5 L711.50,730.5 L711.50,759 L712.00,759 L712.00,730.5 L715.50,730.5 L715.50,759 L717.50,759 L717.50,730.5 L720.50,730.5 L720.50,759 L721.00,759 L721.00,730.5 L724.50,730.5 L724.50,759 L725.00,759 L725.00,730.5 L727.50,730.5 L727.50,759 L728.00,759 L728.00,730.5 L731.50,730.5 L731.50,759 L732.00,759 L732.00,730.5 L735.50,730.5 L735.50,759 L738.50,759 L738.50,730.5 L741.50,730.5 L741.50,759 L742.00,759 L742.00,730.5 L745.50,730.5 L745.50,759 L746.00,759 L746.00,730.5 L749.50,730.5 L749.50,759 L750.00,759 L750.00,730.5 L754.50,730.5 L754.50,759 L755.00,759 L755.00,730.5 L758.50,730.5 L758.50,759 L759.00,759 L759.00,730.5 L762.50,730.5 L762.50,759 L763.00,759 L763.00,730.5 L766.50,730.5 L766.50,759 L767.00,759 L767.00,730.5 L769.50,730.5 L769.50,759 L770.00,759 L770.00,730.5 L774.50,730.5 L774.50,759 L775.00,759 L775.00,730.5 L778.50,730.5 L778.50,759 L779.00,759 L779.00,730.5 L782.50,730.5 L782.50,759 L783.00,759 L783.00,730.5 L786.50,730.5 L786.50,759 L787.00,759 L787.00,730.5 L789.50,730.5 L789.50,759 L790.00,759 L790.00,730.5 L794.50,730.5 L794.50,759 L795.00,759 L795.00,730.5 L798.50,730.5 L798.50,759 L799.00,759 L799.00,730.5 L803.50,730.5 L803.50,759 L804.00,759 L804.00,730.5 L807.50,730.5 L807.50,759 L808.00,759 L808.00,730.5 L812.50,730.5 L812.50,759 L813.00,759 L813.00,730.5 L815.50,730.5 L815.50,759 L816.00,759 L816.00,730.5 L819.50,730.5 L819.50,759 L820.00,759 L820.00,730.5 L823.50,730.5 L823.50,759 L826.50,759 L826.50,730.5 L829.50,730.5 L829.50,759 L830.00,759 L830.00,730.5 L832.50,730.5 L832.50,759 L833.00,759 L833.00,730.5 L836.50,730.5 L836.50,759 L837.00,759 L837.00,730.5 L840.50,730.5 L840.50,759 L841.00,759 L841.00,730.5 L843.50,730.5 L843.50,759 L844.00,759 L844.00,730.5 L847.50,730.5 L847.50,759 L848.00,759 L848.00,730.5 L850.50,730.5 L850.50,759 L851.00,759 L851.00,730.5 L855.50,730.5 L855.50,759 L856.00,759 L856.00,730.5 L859.50,730.5 L859.50,759 L860.00,759 L860.00,730.5 L863.50,730.5 L863.50,759 L864.00,759 L864.00,730.5 L867.50,730.5 L867.50,759 L868.00,759 L868.00,730.5 L871.50,730.5 L871.50,759 L872.00,759 L872.00,730.5 L874.50,730.5 L874.50,759 L875.00,759 L875.00,730.5 L878.50,730.5 L878.50,759 L879.00,759 L879.00,730.5 L883.50,730.5 L883.50,759 L884.00,759 L884.00,730.5 L887.50,730.5 L887.50,759 L888.00,759 L888.00,730.5 L892.50,730.5 L892.50,759 L893.00,759 L893.00,730.5 L896.50,730.5 L896.50,759 L897.00,759 L897.00,730.5 L900.50,730.5 L900.50,759 L901.00,759 L901.00,730.5 L904.50,730.5 L904.50,759 L905.00,759 L905.00,730.5 L909.50,730.5 L909.50,759 L910.00,759 L910.00,730.5 L913.50,730.5 L913.50,759 L914.00,759 L914.00,730.5 L916.50,730.5 L916.50,759 L917.00,759 L917.00,730.5 L921.50,730.5 L921.50,759 L922.00,759 L922.00,730.5 L925.50,730.5 L925.50,759 L926.00,759 L926.00,730.5 L929.50,730.5 L929.50,759 L930.00,759 L930.00,730.5 L933.50,730.5 L933.50,759 L934.00,759 L934.00,730.5 L937.50,730.5 L937.50,759 L938.00,759 L938.00,730.5 L941.50,730.5 L941.50,759 L942.00,759 L942.00,730.5 L946.50,730.5 L946.50,759 L947.00,759 L947.00,730.5 L950.50,730.5 L950.50,759 L951.00,759 L951.00,730.5 L954.50,730.5 L954.50,759 L955.00,759 L955.00,730.5 L958.50,730.5 L958.50,759 L959.00,759 L959.00,730.5 L962.50,730.5 L962.50,759 L963.00,759 L963.00,730.5 L966.50,730.5 L966.50,759 L967.00,759 L967.00,730.5 L970.50,730.5 L970.50,759 L971.00,759 L971.00,730.5 L974.50,730.5 L974.50,759 L977.50,759 L977.50,730.5 L980.50,730.5 L980.50,759 L981.00,759 L981.00,730.5 L984.50,730.5 L984.50,759 L985.00,759 L985.00,730.5 L987.50,730.5 L987.50,759 L988.00,759 L988.00,730.5 L991.50,730.5 L991.50,759 L992.00,759 L992.00,730.5 L995.50,730.5 L995.50,759 L996.00,759 L996.00,730.5 L999.50,730.5 L999.50,759 L1000.00,759 L1000.00,730.5 L1003.50,730.5 L1003.50,759 L1004.00,759 L1004.00,730.5 L1008.50,730.5 L1008.50,759 L1009.00,759 L1009.00,730.5 L1012.50,730.5 L1012.50,759 L1013.00,759 L1013.00,730.5 L1016.50,730.5 L1016.50,759 L1017.00,759 L1017.00,730.5 L1020.50,730.5 L1020.50,759 L1023.50,759 L1023.50,730.5 L1026.50,730.5 L1026.50,759 L1029.50,759 L1029.50,730.5 L1032.50,730.5 L1032.50,759 L1033.00,759 L1033.00,730.5 L1037.50,730.5 L1037.50,759 L1040.50,759 L1040.50,730.5 L1042.50,730.5 L1042.50,759 L1043.00,759 L1043.00,730.5 L1046.50,730.5 L1046.50,759 L1047.00,759 L1047.00,730.5 L1050.50,730.5 L1050.50,759 L1051.00,759 L1051.00,730.5 L1054.50,730.5 L1054.50,759 L1055.00,759 L1055.00,730.5 L1058.50,730.5 L1058.50,759 L1059.00,759 L1059.00,730.5 L1062.50,730.5 L1062.50,759 L1063.00,759 L1063.00,730.5 L1066.50,730.5 L1066.50,759 L1067.00,759 L1067.00,730.5 L1071.50,730.5 L1071.50,759 L1072.00,759 L1072.00,730.5 L1076.50,730.5 L1076.50,759 L1077.00,759 L1077.00,730.5 L1081.50,730.5 L1081.50,759 L1082.00,759 L1082.00,730.5 L1085.50,730.5 L1085.50,759 L1086.00,759 L1086.00,730.5 L1089.50,730.5 L1089.50,759 L1090.00,759 L1090.00,730.5 L1093.50,730.5 L1093.50,759 L1094.00,759 L1094.00,730.5 L1097.50,730.5 L1097.50,759 L1098.00,759 L1098.00,730.5 L1100.50,730.5 L1100.50,759 L1101.00,759 L1101.00,730.5 L1104.50,730.5 L1104.50,759 L1105.00,759 L1105.00,730.5 L1107.50,730.5 L1107.50,759 L1108.00,759 L1108.00,730.5 L1111.50,730.5 L1111.50,759 L1112.00,759 L1112.00,730.5 L1116.50,730.5 L1116.50,759 L1119.50,759 L1119.50,730.5 L1122.50,730.5 L1122.50,759 L1123.00,759 L1123.00,730.5 L1126.50,730.5 L1126.50,759 L1129.50,759 L1129.50,730.5 L1131.50,730.5 L1131.50,759 L1132.00,759 L1132.00,730.5 L1136.50,730.5 L1136.50,759 L1137.00,759 L1137.00,730.5 L1140.50,730.5 L1140.50,759 L1141.00,759 L1141.00,730.5 L1143.50,730.5 L1143.50,759 L1144.00,759 L1144.00,730.5 L1147.50,730.5 L1147.50,759 L1148.00,759 L1148.00,730.5 L1151.50,730.5 L1151.50,759 L1152.00,759 L1152.00,730.5 L1155.50,730.5 L1155.50,759 L1156.00,759 L1156.00,730.5 L1160.50,730.5 L1160.50,759 L1161.00,759 L1161.00,730.5 L1163.50,730.5 L1163.50,759 L1164.00,759 L1164.00,730.5 L1167.50,730.5 L1167.50,759 L1168.00,759 L1168.00,730.5 L1171.50,730.5 L1171.50,759 L1172.00,759 L1172.00,730.5 L1176.50,730.5 L1176.50,759 L1178.50,759 L1178.50,730.5 L1181.50,730.5 L1181.50,759 L1182.00,759 L1182.00,730.5 L1185.50,730.5 L1185.50,759 L1186.00,759 L1186.00,730.5 L1189.50,730.5 L1189.50,759 L1190.00,759 L1190.00,730.5 L1192.50,730.5 L1192.50,759 L1193.00,759 L1193.00,730.5 L1196.50,730.5 L1196.50,759 L1197.00,759 L1197.00,730.5 L1200.50,730.5 L1200.50,759 L1201.00,759 L1201.00,730.5 L1203.50,730.5 L1203.50,759 L1204.00,759 L1204.00,730.5 L1206.50,730.5 L1206.50,759 L1209.50,759 L1209.50,730.5 L1211.50,730.5 L1211.50,759 L1212.00,759 L1212.00,730.5 L1215.50,730.5 L1215.50,759 L1216.00,759 L1216.00,730.5 L1220.50,730.5 L1220.50,759 L1221.00,759 L1221.00,730.5 L1224.50,730.5 L1224.50,759 L1225.00,759 L1225.00,730.5 L1228.50,730.5 L1228.50,759 L1229.00,759 L1229.00,730.5 L1231.50,730.5 L1231.50,759 L1232.00,759 L1232.00,730.5 L1235.50,730.5 L1235.50,759 L1236.00,759 L1236.00,730.5 L1238.50,730.5 L1238.50,759 L1239.00,759 L1239.00,730.5 L1241.50,730.5 L1241.50,759 L1242.00,759 L1242.00,730.5 L1245.50,730.5 L1245.50,759 L1246.00,759 L1246.00,730.5 L1250.50,730.5 L1250.50,759 L1251.00,759 L1251.00,730.5 L1254.50,730.5 L1254.50,759 L1255.00,759 L1255.00,730.5 L1258.50,730.5 L1258.50,759 L1259.00,759 L1259.00,730.5 L1263.50,730.5 L1263.50,759 L1264.00,759 L1264.00,730.5 L1266.50,730.5 L1266.50,759 L1267.00,759 L1267.00,730.5 L1270.50,730.5 L1270.50,759 L1271.00,759 L1271.00,730.5 L1274.50,730.5 L1274.50,759 L1275.00,759 L1275.00,730.5 L1277.50,730.5 L1277.50,759 L1278.00,759 L1278.00,730.5 L1280.50,730.5 L1280.50,759 L1281.00,759 L1281.00,730.5 L1284.50,730.5 L1284.50,759 L1287.50,759 L1287.50,730.5 L1289.50,730.5 L1289.50,759 L1290.00,759 L1290.00,730.5 L1294.50,730.5 L1294.50,759 L1295.00,759 L1295.00,730.5 L1298.50,730.5 L1298.50,759 L1299.00,759 L1299.00,730.5 L1302.50,730.5 L1302.50,759 L1303.00,759 L1303.00,730.5 L1306.50,730.5 L1306.50,759 L1307.00,759 L1307.00,730.5 L1309.50,730.5 L1309.50,759 L1310.00,759 L1310.00,730.5 L1314.50,730.5 L1314.50,759 L1315.00,759 L1315.00,730.5 L1318.50,730.5 L1318.50,759 L1319.00,759 L1319.00,730.5 L1321.5,730.5 L1321.5,759" fill="none" stroke="#70b055" stroke-width="1.25"/><rect x="1317.5" y="735" width="4.5" height="20" fill="#1e1e1e"/><line x1="1320" y1="729" x2="1320" y2="772" stroke="#555" stroke-width="1"/><line x1="493.00" y1="774.20" x2="1322.00" y2="774.20" stroke="#7a7a7a" stroke-width="2.2" /><line x1="540.60" y1="774.20" x2="540.60" y2="778.50" stroke="#7a7a7a" stroke-width="1.5" /><text x="540.60" y="787.80" font-size="10.2" fill="#333" text-anchor="middle" font-weight="400" font-family="Liberation Sans">Sep</text><line x1="675.50" y1="774.20" x2="675.50" y2="778.50" stroke="#7a7a7a" stroke-width="1.5" /><text x="675.50" y="787.80" font-size="10.2" fill="#333" text-anchor="middle" font-weight="400" font-family="Liberation Sans">Oct</text><line x1="814.90" y1="774.20" x2="814.90" y2="778.50" stroke="#7a7a7a" stroke-width="1.5" /><text x="814.90" y="787.80" font-size="10.2" fill="#333" text-anchor="middle" font-weight="400" font-family="Liberation Sans">Nov</text><line x1="949.80" y1="774.20" x2="949.80" y2="778.50" stroke="#7a7a7a" stroke-width="1.5" /><text x="949.80" y="787.80" font-size="10.2" fill="#333" text-anchor="middle" font-weight="400" font-family="Liberation Sans">Dec</text><line x1="1089.50" y1="774.20" x2="1089.50" y2="778.50" stroke="#7a7a7a" stroke-width="1.5" /><text x="1089.50" y="787.80" font-size="10.2" fill="#333" text-anchor="middle" font-weight="400" font-family="Liberation Sans">2022</text><line x1="1229.20" y1="774.20" x2="1229.20" y2="778.50" stroke="#7a7a7a" stroke-width="1.5" /><text x="1229.20" y="787.80" font-size="10.2" fill="#333" text-anchor="middle" font-weight="400" font-family="Liberation Sans">Feb</text><line x1="493.50" y1="774.00" x2="493.50" y2="778.50" stroke="#7a7a7a" stroke-width="1.5" /><line x1="1321.50" y1="774.00" x2="1321.50" y2="778.50" stroke="#7a7a7a" stroke-width="1.5" /></svg><div style="position:absolute;left:493.20px;top:690.30px;width:31.30px;height:31.30px;background:#fff;border:1px solid #dcdcdc;border-radius:4px;box-sizing:border-box;"></div><svg style="position:absolute;left:503px;top:700px;" width="12" height="12" viewBox="0 0 12 12"><polygon points="3.5,6 7.5,2.5 7.5,9.5" fill="#333"/></svg><div style="position:absolute;left:529.40px;top:690.30px;width:32.20px;height:31.30px;background:#fff;border:1px solid #dcdcdc;border-radius:4px;box-sizing:border-box;"></div><svg style="position:absolute;left:536.5px;top:697px;" width="18" height="18" viewBox="0 0 18 18"><rect x="2" y="3.5" width="13" height="11.5" rx="1" fill="none" stroke="#777" stroke-width="1.3"/><line x1="2" y1="6.8" x2="15" y2="6.8" stroke="#777" stroke-width="1.3"/><line x1="5" y1="1.8" x2="5" y2="4.8" stroke="#777" stroke-width="1.3"/><line x1="12" y1="1.8" x2="12" y2="4.8" stroke="#777" stroke-width="1.3"/><rect x="9.5" y="10" width="3.3" height="3" fill="#777"/></svg><div style="position:absolute;left:566.30px;top:690.30px;width:32.40px;height:31.30px;background:#fff;border:1px solid #c3d0df;border-radius:4px;box-sizing:border-box;"></div><svg style="position:absolute;left:573.5px;top:697px;" width="18" height="18" viewBox="0 0 18 18"><circle cx="9" cy="9" r="7" fill="none" stroke="#777" stroke-width="1.3"/><polyline points="9,4.5 9,9.3 12.5,9.3" fill="none" stroke="#777" stroke-width="1.3"/></svg><div style="position:absolute;left:820.30px;top:690.50px;width:31.30px;height:31.00px;background:#fff;border:1px solid #dcdcdc;border-radius:4px;box-sizing:border-box;"></div><svg style="position:absolute;left:827px;top:697px;" width="18" height="18" viewBox="0 0 18 18"><polyline points="1.8,1.5 1.8,16.2 16.5,16.2" fill="none" stroke="#555" stroke-width="1.2"/><path d="M2.5,9 Q6,5 9,5 Q13,5 15.5,2.5" fill="none" stroke="#555" stroke-width="1.2"/><line x1="2.5" y1="10" x2="15.5" y2="10" stroke="#555" stroke-width="1.1"/><path d="M2.5,15.5 L6,12.5 L9,12 L12,10.5 L15,9" fill="none" stroke="#777" stroke-width="1" stroke-dasharray="1.2,1"/></svg><div style="position:absolute;left:856.40px;top:690.50px;width:102.10px;height:31.00px;background:#fff;border:1px solid #dcdcdc;border-radius:4px;box-sizing:border-box;"></div><div style="position:absolute;left:927.50px;top:691.50px;width:1.00px;height:29.00px;background:#e0e0e0;"></div><div class="t" style="left:869.20px;top:698.61px;font-size:13.3px;line-height:15.96px;color:#2c2c2c;font-weight:400;">8 hours</div><svg style="position:absolute;left:934px;top:697px;" width="18" height="18" viewBox="0 0 18 18"><rect x="3.5" y="8" width="10.5" height="8.5" rx="1.2" fill="none" stroke="#444" stroke-width="1.6"/><path d="M5.5,8 V5.5 a3.2,3.2 0 0 1 6.4,0 V6" fill="none" stroke="#444" stroke-width="1.6"/><circle cx="8.75" cy="12.3" r="1.2" fill="#444"/></svg><div style="position:absolute;left:963.60px;top:690.50px;width:30.70px;height:31.00px;background:#fff;border:1px solid #ececec;border-radius:4px;box-sizing:border-box;"></div><svg style="position:absolute;left:970px;top:697px;" width="18" height="18" viewBox="0 0 18 18"><path d="M4,9 a5.8,5.8 0 1 1 1.8,4.3" fill="none" stroke="#c4c4c4" stroke-width="1.3"/><polygon points="1.5,8.5 6.5,8.5 4,11.5" fill="#c4c4c4"/><polyline points="9.8,5.5 9.8,9.3 12.5,9.3" fill="none" stroke="#c4c4c4" stroke-width="1.3"/></svg><div style="position:absolute;left:1221.30px;top:690.00px;width:32.30px;height:31.60px;background:#fff;border:1px solid #dcdcdc;border-radius:4px;box-sizing:border-box;"></div><svg style="position:absolute;left:1228.5px;top:697px;" width="18" height="18" viewBox="0 0 18 18"><rect x="2" y="3.5" width="13" height="11.5" rx="1" fill="none" stroke="#777" stroke-width="1.3"/><line x1="2" y1="6.8" x2="15" y2="6.8" stroke="#777" stroke-width="1.3"/><line x1="5" y1="1.8" x2="5" y2="4.8" stroke="#777" stroke-width="1.3"/><line x1="12" y1="1.8" x2="12" y2="4.8" stroke="#777" stroke-width="1.3"/><rect x="9.5" y="10" width="3.3" height="3" fill="#777"/></svg><div style="position:absolute;left:1258.30px;top:690.00px;width:32.40px;height:31.60px;background:#fff;border:1px solid #c3d0df;border-radius:4px;box-sizing:border-box;"></div><svg style="position:absolute;left:1265.5px;top:697px;" width="18" height="18" viewBox="0 0 18 18"><circle cx="9" cy="9" r="7" fill="none" stroke="#777" stroke-width="1.3"/><polyline points="9,4.5 9,9.3 12.5,9.3" fill="none" stroke="#777" stroke-width="1.3"/></svg><div style="position:absolute;left:1290.70px;top:690.00px;width:31.00px;height:31.60px;background:#fff;border:1px solid #dcdcdc;border-radius:4px;box-sizing:border-box;"></div><svg style="position:absolute;left:1300px;top:700px;" width="12" height="12" viewBox="0 0 12 12"><polygon points="8.5,6 4.5,2.5 4.5,9.5" fill="#333"/></svg><div style="position:absolute;left:493.20px;top:798.50px;width:243.50px;height:22.80px;background:#fff;border:1px solid #dcdcdc;border-radius:4px;box-sizing:border-box;"></div><div style="position:absolute;left:633.50px;top:799.50px;width:35.00px;height:20.80px;background:#eff4fa;"></div><div style="position:absolute;left:526.60px;top:799.50px;width:1.00px;height:20.80px;background:#e3e3e3;"></div><div style="position:absolute;left:562.60px;top:799.50px;width:1.00px;height:20.80px;background:#e3e3e3;"></div><div style="position:absolute;left:598.00px;top:799.50px;width:1.00px;height:20.80px;background:#e3e3e3;"></div><div style="position:absolute;left:633.00px;top:799.50px;width:1.00px;height:20.80px;background:#e3e3e3;"></div><div style="position:absolute;left:668.50px;top:799.50px;width:1.00px;height:20.80px;background:#e3e3e3;"></div><div style="position:absolute;left:700.00px;top:799.50px;width:1.00px;height:20.80px;background:#e3e3e3;"></div><div class="t" style="left:310.40px;width:400px;text-align:center;top:802.51px;font-size:13.2px;line-height:15.84px;color:#333;font-weight:400;">1D</div><div class="t" style="left:345.10px;width:400px;text-align:center;top:802.51px;font-size:13.2px;line-height:15.84px;color:#333;font-weight:400;">1W</div><div class="t" style="left:380.80px;width:400px;text-align:center;top:802.51px;font-size:13.2px;line-height:15.84px;color:#333;font-weight:400;">1M</div><div class="t" style="left:416.00px;width:400px;text-align:center;top:802.51px;font-size:13.2px;line-height:15.84px;color:#333;font-weight:400;">3M</div><div class="t" style="left:451.25px;width:400px;text-align:center;top:802.51px;font-size:13.2px;line-height:15.84px;color:#2a6fc4;font-weight:400;">6M</div><div class="t" style="left:484.75px;width:400px;text-align:center;top:802.51px;font-size:13.2px;line-height:15.84px;color:#333;font-weight:400;">1Y</div><div class="t" style="left:518.85px;width:400px;text-align:center;top:802.51px;font-size:13.2px;line-height:15.84px;color:#333;font-weight:400;">ALL</div><div style="position:absolute;left:753.90px;top:798.50px;width:103.00px;height:22.80px;background:#fff;border:1px solid #dcdcdc;border-radius:4px;box-sizing:border-box;"></div><div style="position:absolute;left:834.00px;top:799.50px;width:1.00px;height:20.80px;background:#e3e3e3;"></div><div class="t" style="left:763.00px;top:803.45px;font-size:12.2px;line-height:14.64px;color:#333;font-weight:400;letter-spacing:-0.2px;">CUSTOM</div><svg style="position:absolute;left:818px;top:805px;" width="10" height="6" viewBox="0 0 10 6"><polygon points="0.5,5.5 9.5,5.5 5,0.8" fill="#9b9b9b"/></svg><svg style="position:absolute;left:838px;top:803px;" width="14" height="12" viewBox="0 0 14 12"><rect x="1.8" y="1.8" width="10.5" height="8.5" rx="1" fill="none" stroke="#555" stroke-width="1.2"/><path d="M3.5,4 h1.5 M3.5,8 h1.5 M9,4 h1.5 M9,8 h1.5" stroke="#555" stroke-width="1"/></svg><div style="position:absolute;left:232.80px;top:335.90px;width:147.80px;height:31.70px;background:#7000ff;border-radius:5px;"></div><div class="t" style="left:262.60px;top:343.77px;font-size:14.4px;line-height:17.28px;color:#fff;font-weight:700;">Scale setting</div><div style="position:absolute;left:381.60px;top:336.50px;width:106.60px;height:30.70px;background:#fff;border:2px solid #7000ff;border-radius:6px;box-sizing:border-box;"></div><div class="t" style="left:409.00px;top:343.20px;font-size:15px;line-height:18.0px;color:#7000ff;font-weight:700;">Manual</div><svg style="position:absolute;left:0px;top:0px;pointer-events:none;" width="1380" height="900" viewBox="0 0 1380 900"><line x1="303" y1="367.5" x2="267.5" y2="489" stroke="#7000ff" stroke-width="2"/><polyline points="262.5,478 267.5,489.5 276,484" fill="none" stroke="#7000ff" stroke-width="2" stroke-linejoin="miter"/></svg></div></body></html>
